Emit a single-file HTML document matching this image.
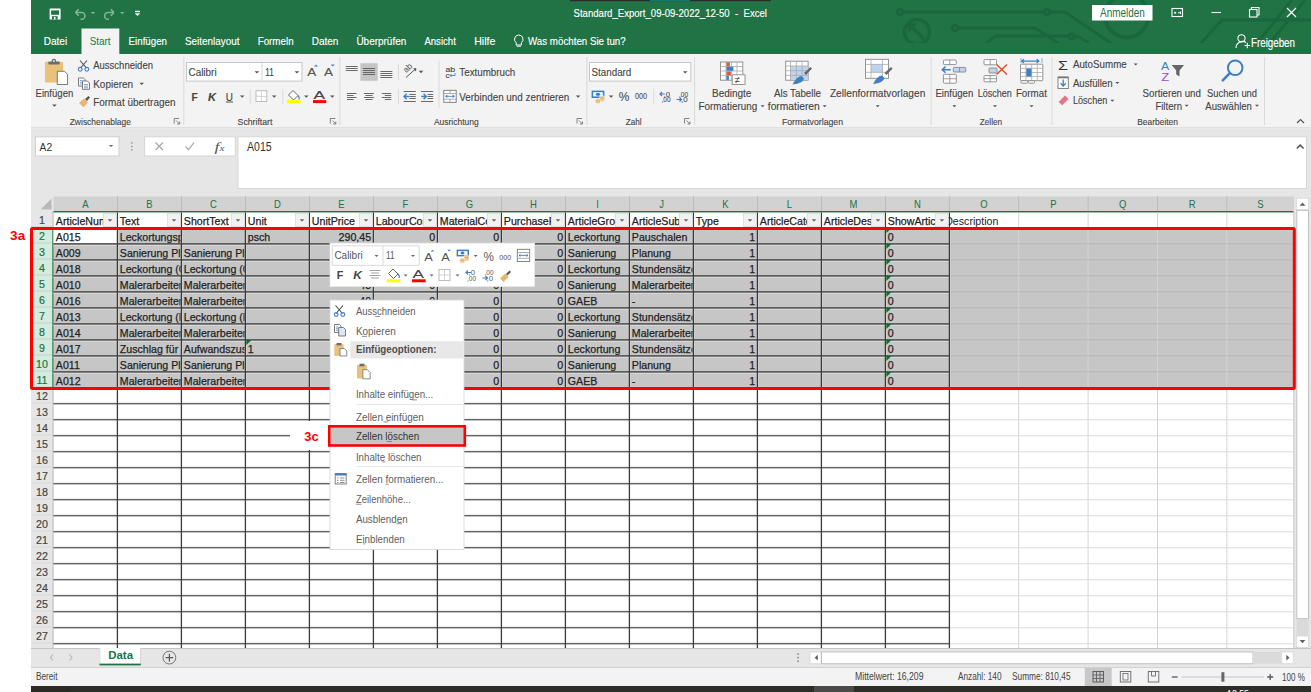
<!DOCTYPE html>
<html><head><meta charset="utf-8"><title>Excel</title>
<style>html,body{margin:0;padding:0;background:#fff;overflow:hidden;width:1311px;height:692px} svg{display:block} text{white-space:pre}</style>
</head><body><svg width="1311" height="692" viewBox="0 0 1311 692">
<rect x="0" y="0" width="1311" height="692" fill="#ffffff" />
<rect x="31" y="0" width="1280" height="54" fill="#217346" />
<svg x="31" y="0" width="1280" height="43" overflow="hidden"><g transform="translate(-31,0)">
<circle cx="900" cy="12" r="2.6" stroke="#1b673d" stroke-width="3" fill="none" stroke-linecap="butt" stroke-linejoin="miter"/>
<path d="M902.6 12 H1044.4" stroke="#1b673d" stroke-width="3" fill="none" stroke-linecap="butt" stroke-linejoin="miter"/>
<circle cx="1047" cy="12" r="2.6" stroke="#1b673d" stroke-width="3" fill="none" stroke-linecap="butt" stroke-linejoin="miter"/>
<path d="M1049.6 12 H1065 L1111 43" stroke="#1b673d" stroke-width="3" fill="none" stroke-linecap="butt" stroke-linejoin="miter"/>
<circle cx="917" cy="32" r="12.5" stroke="#1b673d" stroke-width="3.6" fill="none"/>
<path d="M924 39 L912 27" stroke="#1b673d" stroke-width="3.4" fill="none"/><path d="M908 23 H918 L908 33 Z" fill="#1b673d"/>
<circle cx="955" cy="28" r="2.6" stroke="#1b673d" stroke-width="3" fill="none" stroke-linecap="butt" stroke-linejoin="miter"/>
<path d="M957.6 28 H1035 L1058 43" stroke="#1b673d" stroke-width="3" fill="none" stroke-linecap="butt" stroke-linejoin="miter"/>
<path d="M986 43 L996 36 H1068.9" stroke="#1b673d" stroke-width="3" fill="none" stroke-linecap="butt" stroke-linejoin="miter"/>
<circle cx="1071.5" cy="36.5" r="2.6" stroke="#1b673d" stroke-width="3" fill="none" stroke-linecap="butt" stroke-linejoin="miter"/>
<path d="M1074.1 36.5 H1078 L1089 43" stroke="#1b673d" stroke-width="3" fill="none" stroke-linecap="butt" stroke-linejoin="miter"/>
<circle cx="1126.7" cy="16" r="21.5" stroke="#1b673d" stroke-width="3.8" fill="none"/>
<path d="M1201 43 L1222 20 H1311" stroke="#1b673d" stroke-width="3" fill="none" stroke-linecap="butt" stroke-linejoin="miter"/>
<path d="M1292 0 L1257 43 M1305 0 L1270 43" stroke="#1b673d" stroke-width="3" fill="none" stroke-linecap="butt" stroke-linejoin="miter"/>
</g></svg>
<rect x="570" y="0" width="201" height="1.2" fill="#2b2b2b" />
<rect x="650" y="0" width="40" height="1.2" fill="#0e7b72" />
<rect x="49.6" y="8.4" width="11" height="11.1" fill="#fff" rx="0.6"/>
<rect x="51.1" y="10.4" width="8" height="4.4" fill="#217346" />
<rect x="51.9" y="16.2" width="5.7" height="3.3" fill="#217346" />
<rect x="53.9" y="16.9" width="1.6" height="2.6" fill="#fff" />
<path d="M75.5 12.5 H81.5 A3.4 3.4 0 0 1 81.5 19.3 H80.5 M75.5 12.5 L78.7 9.3 M75.5 12.5 L78.7 15.7" fill="none" stroke="#7fb796" stroke-width="1.6" />
<path d="M90.8 12 h4.4 l-2.2 2.2 z" fill="#7fb796" stroke="none" stroke-width="1" />
<path d="M114 12.5 H108 A3.4 3.4 0 0 0 108 19.3 H109 M114 12.5 L110.8 9.3 M114 12.5 L110.8 15.7" fill="none" stroke="#7fb796" stroke-width="1.6" />
<path d="M120 12 h4.4 l-2.2 2.2 z" fill="#7fb796" stroke="none" stroke-width="1" />
<rect x="135" y="10.8" width="5" height="1.3" fill="#fff" />
<path d="M134.7 13.2 h5.6 l-2.8 2.8 z" fill="#fff" stroke="none" stroke-width="1" />
<text x="573.50" y="17" fill="#ffffff" text-anchor="start" style='font-family:"Liberation Sans", sans-serif;font-size:11.8px;font-weight:400;' textLength="193.50" lengthAdjust="spacingAndGlyphs" stroke="#ffffff" stroke-width="0.15">Standard_Export_09-09-2022_12-50  -  Excel</text>
<rect x="1092" y="5" width="60.5" height="15.5" fill="#ffffff" />
<text x="1100.00" y="16.6" fill="#217346" text-anchor="start" style='font-family:"Liberation Sans", sans-serif;font-size:12px;font-weight:400;' textLength="44.80" lengthAdjust="spacingAndGlyphs" >Anmelden</text>
<rect x="1172" y="8.5" width="10.5" height="8" fill="none" stroke="#fff" stroke-width="1.1"/>
<path d="M1174 12.8 h2.2 M1175.1 11.8 v2 M1178 12.8 h2.5 M1180.5 11.5 v2.6" fill="none" stroke="#fff" stroke-width="1" />
<line x1="1211.5" y1="12.5" x2="1221" y2="12.5" stroke="#ffffff" stroke-width="1.1" />
<rect x="1249.5" y="9.5" width="7.5" height="7.5" fill="none" stroke="#fff" stroke-width="1.1"/>
<path d="M1251.5 9.5 V7.5 H1259 V15 H1257" fill="none" stroke="#fff" stroke-width="1.1" />
<path d="M1287 8 L1296 17 M1296 8 L1287 17" fill="none" stroke="#fff" stroke-width="1.2" />
<rect x="81.5" y="28.5" width="37.8" height="25.5" fill="#f3f3f3" />
<text x="43.70" y="44.8" fill="#ffffff" text-anchor="start" style='font-family:"Liberation Sans", sans-serif;font-size:11.8px;font-weight:400;' textLength="23.50" lengthAdjust="spacingAndGlyphs" stroke="#ffffff" stroke-width="0.15">Datei</text>
<text x="89.70" y="44.8" fill="#217346" text-anchor="start" style='font-family:"Liberation Sans", sans-serif;font-size:11.8px;font-weight:400;' textLength="20.80" lengthAdjust="spacingAndGlyphs" >Start</text>
<text x="128.60" y="44.8" fill="#ffffff" text-anchor="start" style='font-family:"Liberation Sans", sans-serif;font-size:11.8px;font-weight:400;' textLength="38.40" lengthAdjust="spacingAndGlyphs" stroke="#ffffff" stroke-width="0.15">Einfügen</text>
<text x="185.00" y="44.8" fill="#ffffff" text-anchor="start" style='font-family:"Liberation Sans", sans-serif;font-size:11.8px;font-weight:400;' textLength="54.50" lengthAdjust="spacingAndGlyphs" stroke="#ffffff" stroke-width="0.15">Seitenlayout</text>
<text x="257.70" y="44.8" fill="#ffffff" text-anchor="start" style='font-family:"Liberation Sans", sans-serif;font-size:11.8px;font-weight:400;' textLength="35.90" lengthAdjust="spacingAndGlyphs" stroke="#ffffff" stroke-width="0.15">Formeln</text>
<text x="311.70" y="44.8" fill="#ffffff" text-anchor="start" style='font-family:"Liberation Sans", sans-serif;font-size:11.8px;font-weight:400;' textLength="26.70" lengthAdjust="spacingAndGlyphs" stroke="#ffffff" stroke-width="0.15">Daten</text>
<text x="356.40" y="44.8" fill="#ffffff" text-anchor="start" style='font-family:"Liberation Sans", sans-serif;font-size:11.8px;font-weight:400;' textLength="49.90" lengthAdjust="spacingAndGlyphs" stroke="#ffffff" stroke-width="0.15">Überprüfen</text>
<text x="424.40" y="44.8" fill="#ffffff" text-anchor="start" style='font-family:"Liberation Sans", sans-serif;font-size:11.8px;font-weight:400;' textLength="31.40" lengthAdjust="spacingAndGlyphs" stroke="#ffffff" stroke-width="0.15">Ansicht</text>
<text x="474.20" y="44.8" fill="#ffffff" text-anchor="start" style='font-family:"Liberation Sans", sans-serif;font-size:11.8px;font-weight:400;' textLength="21.20" lengthAdjust="spacingAndGlyphs" stroke="#ffffff" stroke-width="0.15">Hilfe</text>
<path d="M518.8 35 a4.3 4.3 0 0 1 2.6 7.7 v2.3 h-5.2 v-2.3 a4.3 4.3 0 0 1 2.6 -7.7 z" fill="none" stroke="#fff" stroke-width="1" />
<line x1="516.6" y1="46.2" x2="521" y2="46.2" stroke="#fff" stroke-width="1" />
<text x="528.00" y="44.8" fill="#ffffff" text-anchor="start" style='font-family:"Liberation Sans", sans-serif;font-size:11.8px;font-weight:400;' textLength="97.70" lengthAdjust="spacingAndGlyphs" stroke="#ffffff" stroke-width="0.15">Was möchten Sie tun?</text>
<circle cx="1241.5" cy="38.3" r="3.6" fill="none" stroke="#fff" stroke-width="1.1"/>
<path d="M1236 48 a6.5 6.5 0 0 1 10 -5.5" fill="none" stroke="#fff" stroke-width="1.1" />
<path d="M1244.5 45.5 h5.5 M1247.25 42.7 v5.6" fill="none" stroke="#fff" stroke-width="1.1" />
<text x="1251.00" y="46.6" fill="#ffffff" text-anchor="start" style='font-family:"Liberation Sans", sans-serif;font-size:12px;font-weight:400;' textLength="44.00" lengthAdjust="spacingAndGlyphs" stroke="#ffffff" stroke-width="0.15">Freigeben</text>
<rect x="31" y="54" width="1280" height="73.5" fill="#f3f3f3" />
<rect x="31" y="127.3" width="1280" height="1" fill="#d5d5d5" />
<rect x="44.9" y="61.8" width="18.2" height="20.8" fill="#e8c17b" rx="1"/>
<rect x="48.3" y="61.4" width="11.4" height="3" fill="#6d6d6d" rx="1"/>
<circle cx="53.9" cy="61" r="2.3" fill="#6d6d6d"/><circle cx="53.9" cy="61" r="0.9" fill="#f3f3f3"/>
<path d="M57.3 71.3 H64.5 L67.6 74.4 V84.5 H57.3 Z" fill="#fff" stroke="#6d6d6d" stroke-width="0.9" />
<text x="35.50" y="96.7" fill="#444444" text-anchor="start" style='font-family:"Liberation Sans", sans-serif;font-size:10.8px;font-weight:400;' textLength="37.80" lengthAdjust="spacingAndGlyphs" stroke="#444444" stroke-width="0.12">Einfügen</text>
<path d="M52.1 104.44999999999999 h4.6 l-2.3 2.3 z" fill="#555" stroke="none" stroke-width="1" />
<path d="M80 60.5 L86.5 68 M87 60.5 L80.5 68" fill="none" stroke="#505050" stroke-width="1.1" />
<circle cx="80.2" cy="69.3" r="1.9" fill="none" stroke="#3f7fc5" stroke-width="1.1"/>
<circle cx="86.8" cy="69.3" r="1.9" fill="none" stroke="#3f7fc5" stroke-width="1.1"/>
<text x="93.20" y="69.3" fill="#444444" text-anchor="start" style='font-family:"Liberation Sans", sans-serif;font-size:10.8px;font-weight:400;' textLength="59.80" lengthAdjust="spacingAndGlyphs" stroke="#444444" stroke-width="0.12">Ausschneiden</text>
<path d="M78.5 78 H83.5 L85 79.5 V86 H78.5 Z" fill="#fff" stroke="#6d6d6d" stroke-width="0.9" />
<path d="M82.5 81 H87.5 L89.5 83 V89.3 H82.5 Z" fill="#fff" stroke="#6d6d6d" stroke-width="0.9" />
<path d="M79.8 80.5 h2.5 M79.8 82.3 h2.5 M79.8 84 h2.5 M84 84.5 h4 M84 86.2 h4 M84 87.8 h4" fill="none" stroke="#3f7fc5" stroke-width="0.7" />
<text x="93.20" y="87.6" fill="#444444" text-anchor="start" style='font-family:"Liberation Sans", sans-serif;font-size:10.8px;font-weight:400;' textLength="39.90" lengthAdjust="spacingAndGlyphs" stroke="#444444" stroke-width="0.12">Kopieren</text>
<path d="M139.39999999999998 82.75 h4.6 l-2.3 2.3 z" fill="#555" stroke="none" stroke-width="1" />
<path d="M79 103 L84 98.5 L88 102.5 L83.5 107.2 Z" fill="#e8b66f" stroke="none" stroke-width="1" />
<path d="M85 99 L88.5 96 L90 97.5 L87 101 Z" fill="#555" stroke="none" stroke-width="1" />
<text x="93.20" y="106.2" fill="#444444" text-anchor="start" style='font-family:"Liberation Sans", sans-serif;font-size:10.8px;font-weight:400;' textLength="82.30" lengthAdjust="spacingAndGlyphs" stroke="#444444" stroke-width="0.12">Format übertragen</text>
<text x="69.70" y="124.5" fill="#444444" text-anchor="start" style='font-family:"Liberation Sans", sans-serif;font-size:9.8px;font-weight:400;' textLength="61.30" lengthAdjust="spacingAndGlyphs" stroke="#444444" stroke-width="0.12">Zwischenablage</text>
<path d="M174.2 123.5 V118.5 H179.2" fill="none" stroke="#777" stroke-width="0.9" />
<path d="M176.2 120.5 L179.7 124.0 M179.7 121.5 V124.0 H177.2" fill="none" stroke="#777" stroke-width="0.9" />
<rect x="183.3" y="57" width="1" height="68" fill="#dadada" />
<rect x="186.5" y="62.5" width="115.5" height="18.6" fill="#ffffff" stroke="#c6c6c6" stroke-width="1"/>
<line x1="262" y1="63" x2="262" y2="80.6" stroke="#d4d4d4" stroke-width="1" />
<text x="188.50" y="76" fill="#444" text-anchor="start" style='font-family:"Liberation Sans", sans-serif;font-size:10.8px;font-weight:400;' textLength="28.10" lengthAdjust="spacingAndGlyphs" stroke="#444" stroke-width="0.12">Calibri</text>
<path d="M254.59999999999997 71.14999999999999 h4.6 l-2.3 2.3 z" fill="#555" stroke="none" stroke-width="1" />
<text x="265.20" y="76" fill="#444" text-anchor="start" style='font-family:"Liberation Sans", sans-serif;font-size:10.8px;font-weight:400;' textLength="8.50" lengthAdjust="spacingAndGlyphs" stroke="#444" stroke-width="0.12">11</text>
<path d="M294.59999999999997 71.14999999999999 h4.6 l-2.3 2.3 z" fill="#555" stroke="none" stroke-width="1" />
<text x="307.30" y="76" fill="#555" text-anchor="start" style='font-family:"Liberation Sans", sans-serif;font-size:11.5px;font-weight:400;' textLength="9.00" lengthAdjust="spacingAndGlyphs" stroke="#555" stroke-width="0.12">A</text>
<path d="M314 66.5 l2 -2 l2 2 z" fill="#3f7fc5" stroke="none" stroke-width="1" />
<text x="324.00" y="76" fill="#555" text-anchor="start" style='font-family:"Liberation Sans", sans-serif;font-size:11.5px;font-weight:400;' textLength="9.00" lengthAdjust="spacingAndGlyphs" stroke="#555" stroke-width="0.12">A</text>
<path d="M330.8 64.5 l2 2 l2 -2 z" fill="#3f7fc5" stroke="none" stroke-width="1" />
<text x="191.60" y="101" fill="#444" text-anchor="start" style='font-family:"Liberation Sans", sans-serif;font-size:10.5px;font-weight:700;' textLength="6.20" lengthAdjust="spacingAndGlyphs" stroke="#444" stroke-width="0.12">F</text>
<text x="208.00" y="101" fill="#444" text-anchor="start" style='font-family:"Liberation Sans", sans-serif;font-size:10.5px;font-weight:700;font-style:italic' textLength="8.00" lengthAdjust="spacingAndGlyphs" stroke="#444" stroke-width="0.12">K</text>
<text x="225.80" y="100.5" fill="#444" text-anchor="start" style='font-family:"Liberation Sans", sans-serif;font-size:10.5px;font-weight:400;' textLength="7.20" lengthAdjust="spacingAndGlyphs" stroke="#444" stroke-width="0.12">U</text>
<line x1="225.8" y1="102" x2="233" y2="102" stroke="#444" stroke-width="0.9" />
<path d="M239.89999999999998 95.55 h4.6 l-2.3 2.3 z" fill="#555" stroke="none" stroke-width="1" />
<rect x="249.8" y="89.4" width="1" height="14.899999999999991" fill="#dadada" />
<rect x="256" y="90.7" width="10.8" height="10.8" fill="#fff" stroke="#b5b5b5" stroke-width="0.9"/>
<line x1="261.4" y1="90.7" x2="261.4" y2="101.5" stroke="#c8c8c8" stroke-width="0.8" />
<line x1="256" y1="96.1" x2="266.8" y2="96.9" stroke="#c8c8c8" stroke-width="0.8" />
<path d="M271.9 95.55 h4.6 l-2.3 2.3 z" fill="#555" stroke="none" stroke-width="1" />
<rect x="282.3" y="89.4" width="1" height="14.899999999999991" fill="#dadada" />
<path d="M288.5 95 L293 90.5 L298 95.5 L293.5 100 Z" fill="#fff" stroke="#555" stroke-width="0.9" />
<path d="M298 95.5 q2 2 1 4" fill="none" stroke="#3f7fc5" stroke-width="1.2" />
<rect x="286.8" y="100.1" width="13.8" height="3" fill="#ffff00" />
<path d="M304.0 95.55 h4.6 l-2.3 2.3 z" fill="#555" stroke="none" stroke-width="1" />
<text x="313.60" y="98.6" fill="#444" text-anchor="start" style='font-family:"Liberation Sans", sans-serif;font-size:11px;font-weight:400;' textLength="11.60" lengthAdjust="spacingAndGlyphs" stroke="#444" stroke-width="0.12">A</text>
<rect x="313" y="100.1" width="13.2" height="3" fill="#ff0000" />
<path d="M330.0 95.55 h4.6 l-2.3 2.3 z" fill="#555" stroke="none" stroke-width="1" />
<text x="237.60" y="124.5" fill="#444444" text-anchor="start" style='font-family:"Liberation Sans", sans-serif;font-size:9.8px;font-weight:400;' textLength="34.80" lengthAdjust="spacingAndGlyphs" stroke="#444444" stroke-width="0.12">Schriftart</text>
<path d="M330.3 123.5 V118.5 H335.3" fill="none" stroke="#777" stroke-width="0.9" />
<path d="M332.3 120.5 L335.8 124.0 M335.8 121.5 V124.0 H333.3" fill="none" stroke="#777" stroke-width="0.9" />
<rect x="339.4" y="57" width="1" height="68" fill="#dadada" />
<line x1="345.7" y1="66.5" x2="357.7" y2="66.5" stroke="#6a6a6a" stroke-width="1" />
<line x1="345.7" y1="68.5" x2="357.7" y2="68.5" stroke="#6a6a6a" stroke-width="1" />
<line x1="345.7" y1="70.5" x2="357.7" y2="70.5" stroke="#6a6a6a" stroke-width="1" />
<rect x="360.4" y="63.2" width="17.3" height="17.6" fill="#c5c5c5" />
<line x1="363" y1="68.5" x2="375" y2="68.5" stroke="#666" stroke-width="1" />
<line x1="363" y1="70.5" x2="375" y2="70.5" stroke="#666" stroke-width="1" />
<line x1="363" y1="72.5" x2="375" y2="72.5" stroke="#666" stroke-width="1" />
<line x1="363" y1="74.5" x2="375" y2="74.5" stroke="#666" stroke-width="1" />
<line x1="380.4" y1="71.5" x2="392.4" y2="71.5" stroke="#6a6a6a" stroke-width="1" />
<line x1="380.4" y1="73.5" x2="392.4" y2="73.5" stroke="#6a6a6a" stroke-width="1" />
<line x1="380.4" y1="75.5" x2="392.4" y2="75.5" stroke="#6a6a6a" stroke-width="1" />
<line x1="380.4" y1="77.5" x2="392.4" y2="77.5" stroke="#6a6a6a" stroke-width="1" />
<rect x="397.9" y="64.4" width="1" height="15.799999999999997" fill="#dadada" />
<text x="403.20" y="71.8" fill="#555" text-anchor="start" style='font-family:"Liberation Sans", sans-serif;font-size:8.5px;font-weight:400;' transform="rotate(-45 406.5 69)">ab</text>
<path d="M406 77.5 L415.5 69" fill="none" stroke="#555" stroke-width="1" />
<path d="M413 68.3 L416.3 68.2 L416 71.5 Z" fill="#555" stroke="none" stroke-width="1" />
<path d="M418.7 70.85 h4.6 l-2.3 2.3 z" fill="#555" stroke="none" stroke-width="1" />
<rect x="438.5" y="60.7" width="1" height="47.0" fill="#dadada" />
<text x="445.40" y="71.5" fill="#444" text-anchor="start" style='font-family:"Liberation Sans", sans-serif;font-size:7.5px;font-weight:400;' textLength="9.60" lengthAdjust="spacingAndGlyphs" stroke="#444" stroke-width="0.12">ab</text>
<text x="445.40" y="78" fill="#444" text-anchor="start" style='font-family:"Liberation Sans", sans-serif;font-size:7.5px;font-weight:400;' textLength="4.00" lengthAdjust="spacingAndGlyphs" stroke="#444" stroke-width="0.12">c</text>
<path d="M455 73 v2.5 h-5 M451.5 74 l-1.5 1.5 l1.5 1.5" fill="none" stroke="#3f7fc5" stroke-width="0.9" />
<text x="459.30" y="76" fill="#444444" text-anchor="start" style='font-family:"Liberation Sans", sans-serif;font-size:10.8px;font-weight:400;' textLength="56.00" lengthAdjust="spacingAndGlyphs" stroke="#444444" stroke-width="0.12">Textumbruch</text>
<line x1="347" y1="93.5" x2="356.5" y2="93.5" stroke="#6a6a6a" stroke-width="1" />
<line x1="347" y1="95.5" x2="353.5" y2="95.5" stroke="#6a6a6a" stroke-width="1" />
<line x1="347" y1="97.5" x2="356.5" y2="97.5" stroke="#6a6a6a" stroke-width="1" />
<line x1="347" y1="99.5" x2="353.5" y2="99.5" stroke="#6a6a6a" stroke-width="1" />
<line x1="364.0" y1="93.5" x2="374.0" y2="93.5" stroke="#6a6a6a" stroke-width="1" />
<line x1="365.5" y1="95.5" x2="372.5" y2="95.5" stroke="#6a6a6a" stroke-width="1" />
<line x1="364.0" y1="97.5" x2="374.0" y2="97.5" stroke="#6a6a6a" stroke-width="1" />
<line x1="365.5" y1="99.5" x2="372.5" y2="99.5" stroke="#6a6a6a" stroke-width="1" />
<line x1="381.8" y1="93.5" x2="391.3" y2="93.5" stroke="#6a6a6a" stroke-width="1" />
<line x1="384.8" y1="95.5" x2="391.3" y2="95.5" stroke="#6a6a6a" stroke-width="1" />
<line x1="381.8" y1="97.5" x2="391.3" y2="97.5" stroke="#6a6a6a" stroke-width="1" />
<line x1="384.8" y1="99.5" x2="391.3" y2="99.5" stroke="#6a6a6a" stroke-width="1" />
<rect x="397.9" y="88.8" width="1" height="15.799999999999997" fill="#dadada" />
<line x1="403.6" y1="91.5" x2="415.8" y2="91.5" stroke="#6a6a6a" stroke-width="1" />
<line x1="409.3" y1="94.5" x2="415.8" y2="94.5" stroke="#6a6a6a" stroke-width="1" />
<line x1="409.3" y1="96.5" x2="415.8" y2="96.5" stroke="#6a6a6a" stroke-width="1" />
<line x1="409.3" y1="98.5" x2="415.8" y2="98.5" stroke="#6a6a6a" stroke-width="1" />
<line x1="403.6" y1="101.5" x2="415.8" y2="101.5" stroke="#6a6a6a" stroke-width="1" />
<path d="M404 96.5 h5 M406.7 93.8 l-2.7 2.7 l2.7 2.7" fill="none" stroke="#3f7fc5" stroke-width="1.4" />
<line x1="421" y1="91.5" x2="433.2" y2="91.5" stroke="#6a6a6a" stroke-width="1" />
<line x1="427.5" y1="94.5" x2="433.2" y2="94.5" stroke="#6a6a6a" stroke-width="1" />
<line x1="427.5" y1="96.5" x2="433.2" y2="96.5" stroke="#6a6a6a" stroke-width="1" />
<line x1="427.5" y1="98.5" x2="433.2" y2="98.5" stroke="#6a6a6a" stroke-width="1" />
<line x1="421" y1="101.5" x2="433.2" y2="101.5" stroke="#6a6a6a" stroke-width="1" />
<path d="M421.3 96.5 h5 M423.6 93.8 l2.7 2.7 l-2.7 2.7" fill="none" stroke="#3f7fc5" stroke-width="1.4" />
<rect x="443.8" y="90.3" width="12.4" height="12" fill="#fff" stroke="#777" stroke-width="0.9"/>
<line x1="443.8" y1="93.5" x2="456.2" y2="93.5" stroke="#999" stroke-width="0.8" />
<line x1="443.8" y1="99.2" x2="456.2" y2="99.2" stroke="#999" stroke-width="0.8" />
<path d="M446.5 96.3 h7" fill="none" stroke="#3f7fc5" stroke-width="0.9" />
<path d="M445 96.3 l2.3 -1.8 v3.6 z M455 96.3 l-2.3 -1.8 v3.6 z" fill="#3f7fc5" stroke="none" stroke-width="1" />
<line x1="450" y1="90.3" x2="450" y2="93.5" stroke="#999" stroke-width="0.8" />
<line x1="450" y1="99.2" x2="450" y2="102.3" stroke="#999" stroke-width="0.8" />
<text x="459.30" y="100.6" fill="#444444" text-anchor="start" style='font-family:"Liberation Sans", sans-serif;font-size:10.8px;font-weight:400;' textLength="110.00" lengthAdjust="spacingAndGlyphs" stroke="#444444" stroke-width="0.12">Verbinden und zentrieren</text>
<path d="M575.8000000000001 95.55 h4.6 l-2.3 2.3 z" fill="#555" stroke="none" stroke-width="1" />
<text x="433.90" y="124.5" fill="#444444" text-anchor="start" style='font-family:"Liberation Sans", sans-serif;font-size:9.8px;font-weight:400;' textLength="44.80" lengthAdjust="spacingAndGlyphs" stroke="#444444" stroke-width="0.12">Ausrichtung</text>
<path d="M577 123.5 V118.5 H582" fill="none" stroke="#777" stroke-width="0.9" />
<path d="M579 120.5 L582.5 124.0 M582.5 121.5 V124.0 H580" fill="none" stroke="#777" stroke-width="0.9" />
<rect x="586.4" y="57" width="1" height="68" fill="#dadada" />
<rect x="589.5" y="62.5" width="101.3" height="18.6" fill="#ffffff" stroke="#c6c6c6" stroke-width="1"/>
<text x="591.60" y="76" fill="#444" text-anchor="start" style='font-family:"Liberation Sans", sans-serif;font-size:10.8px;font-weight:400;' textLength="39.70" lengthAdjust="spacingAndGlyphs" stroke="#444" stroke-width="0.12">Standard</text>
<path d="M682.9000000000001 71.14999999999999 h4.6 l-2.3 2.3 z" fill="#555" stroke="none" stroke-width="1" />
<rect x="591.6" y="90.6" width="12.8" height="7.4" fill="#3f7fc5" />
<rect x="593.2" y="92.2" width="9.6" height="4.2" fill="#fff" />
<ellipse cx="598" cy="94.3" rx="2.2" ry="1.6" fill="#3f7fc5"/>
<rect x="599.6" y="95.8" width="5" height="5.8" rx="1.6" fill="#eec58a" stroke="#f3f3f3" stroke-width="0.6"/>
<line x1="599.8" y1="98.2" x2="604.4" y2="98.2" stroke="#d9a860" stroke-width="0.6" />
<rect x="595.4" y="98.6" width="5" height="5" rx="1.6" fill="#eec58a" stroke="#f3f3f3" stroke-width="0.6"/>
<line x1="595.6" y1="101" x2="600.2" y2="101" stroke="#d9a860" stroke-width="0.6" />
<path d="M608.8000000000001 95.55 h4.6 l-2.3 2.3 z" fill="#555" stroke="none" stroke-width="1" />
<text x="618.80" y="101" fill="#555" text-anchor="start" style='font-family:"Liberation Sans", sans-serif;font-size:12px;font-weight:400;' textLength="10.60" lengthAdjust="spacingAndGlyphs" stroke="#555" stroke-width="0.12">%</text>
<text x="634.90" y="99.3" fill="#555" text-anchor="start" style='font-family:"Liberation Sans", sans-serif;font-size:8.5px;font-weight:400;' textLength="12.20" lengthAdjust="spacingAndGlyphs" stroke="#555" stroke-width="0.12">000</text>
<rect x="653.2" y="88.8" width="1" height="15.799999999999997" fill="#dadada" />
<text x="663.50" y="96.5" fill="#555" text-anchor="start" style='font-family:"Liberation Sans", sans-serif;font-size:7px;font-weight:400;' textLength="6.50" lengthAdjust="spacingAndGlyphs" stroke="#555" stroke-width="0.12">,0</text>
<text x="661.50" y="102" fill="#555" text-anchor="start" style='font-family:"Liberation Sans", sans-serif;font-size:7px;font-weight:400;' textLength="9.00" lengthAdjust="spacingAndGlyphs" stroke="#555" stroke-width="0.12">,00</text>
<path d="M659.8 94 h5 M662 92 l-2 2 l2 2" fill="none" stroke="#3f7fc5" stroke-width="1.2" />
<text x="679.00" y="96.5" fill="#555" text-anchor="start" style='font-family:"Liberation Sans", sans-serif;font-size:7px;font-weight:400;' textLength="9.00" lengthAdjust="spacingAndGlyphs" stroke="#555" stroke-width="0.12">,00</text>
<text x="681.00" y="102" fill="#555" text-anchor="start" style='font-family:"Liberation Sans", sans-serif;font-size:7px;font-weight:400;' textLength="6.50" lengthAdjust="spacingAndGlyphs" stroke="#555" stroke-width="0.12">,0</text>
<path d="M676.5 99.5 h5 M679.5 97.5 l2 2 l-2 2" fill="none" stroke="#3f7fc5" stroke-width="1.2" />
<text x="625.80" y="124.5" fill="#444444" text-anchor="start" style='font-family:"Liberation Sans", sans-serif;font-size:9.8px;font-weight:400;' textLength="15.80" lengthAdjust="spacingAndGlyphs" stroke="#444444" stroke-width="0.12">Zahl</text>
<path d="M684.5 123.5 V118.5 H689.5" fill="none" stroke="#777" stroke-width="0.9" />
<path d="M686.5 120.5 L690.0 124.0 M690.0 121.5 V124.0 H687.5" fill="none" stroke="#777" stroke-width="0.9" />
<rect x="694.1" y="57" width="1" height="68" fill="#dadada" />
<rect x="720.5" y="62" width="22.3" height="18.2" fill="#fff" stroke="#888" stroke-width="0.9"/>
<line x1="720.5" y1="66.5" x2="742.8" y2="66.5" stroke="#aaa" stroke-width="0.8" />
<line x1="720.5" y1="71" x2="742.8" y2="71" stroke="#aaa" stroke-width="0.8" />
<line x1="720.5" y1="75.6" x2="742.8" y2="75.6" stroke="#aaa" stroke-width="0.8" />
<line x1="726" y1="62" x2="726" y2="80.2" stroke="#aaa" stroke-width="0.8" />
<line x1="731.5" y1="62" x2="731.5" y2="80.2" stroke="#aaa" stroke-width="0.8" />
<line x1="737" y1="62" x2="737" y2="80.2" stroke="#aaa" stroke-width="0.8" />
<rect x="726.4" y="62.4" width="3.5" height="4" fill="#e05a36" />
<rect x="726.4" y="66.8" width="7" height="4" fill="#3f7fc5" />
<rect x="726.4" y="71.4" width="4.5" height="4" fill="#e05a36" />
<rect x="726.4" y="75.9" width="2.5" height="4" fill="#3f7fc5" />
<rect x="732.2" y="74.8" width="12.8" height="9.7" fill="#fff" stroke="#888" stroke-width="0.9"/>
<text x="735.00" y="82.5" fill="#444" text-anchor="start" style='font-family:"Liberation Sans", sans-serif;font-size:9px;font-weight:400;' stroke="#444" stroke-width="0.12">≠</text>
<text x="712.00" y="96.9" fill="#444444" text-anchor="start" style='font-family:"Liberation Sans", sans-serif;font-size:10.8px;font-weight:400;' textLength="39.40" lengthAdjust="spacingAndGlyphs" stroke="#444444" stroke-width="0.12">Bedingte</text>
<text x="698.60" y="110.0" fill="#444444" text-anchor="start" style='font-family:"Liberation Sans", sans-serif;font-size:10.8px;font-weight:400;' textLength="58.60" lengthAdjust="spacingAndGlyphs" stroke="#444444" stroke-width="0.12">Formatierung</text>
<path d="M760.6 105.2 h4 l-2 2 z" fill="#555" stroke="none" stroke-width="1" />
<rect x="785.7" y="61.2" width="22.4" height="19" fill="#fff" stroke="#888" stroke-width="0.9"/>
<rect x="790.5" y="66" width="17.5" height="14" fill="#bcd4ee" />
<line x1="785.7" y1="66" x2="808.1" y2="66" stroke="#aaa" stroke-width="0.8" />
<line x1="785.7" y1="70.7" x2="808.1" y2="70.7" stroke="#aaa" stroke-width="0.8" />
<line x1="785.7" y1="75.4" x2="808.1" y2="75.4" stroke="#aaa" stroke-width="0.8" />
<line x1="790.5" y1="61.2" x2="790.5" y2="80.2" stroke="#aaa" stroke-width="0.8" />
<line x1="796.3" y1="61.2" x2="796.3" y2="80.2" stroke="#aaa" stroke-width="0.8" />
<line x1="802.1" y1="61.2" x2="802.1" y2="80.2" stroke="#aaa" stroke-width="0.8" />
<path d="M804 73 L810.5 67 L812 68.5 L806 75 Z" fill="#666" stroke="none" stroke-width="1" />
<path d="M792.5 84.5 Q797 76 801.5 76 L804 78.5 Q803 83.5 792.5 84.5 Z" fill="#3f7fc5" stroke="none" stroke-width="1" />
<text x="774.00" y="96.9" fill="#444444" text-anchor="start" style='font-family:"Liberation Sans", sans-serif;font-size:10.8px;font-weight:400;' textLength="47.00" lengthAdjust="spacingAndGlyphs" stroke="#444444" stroke-width="0.12">Als Tabelle</text>
<text x="767.80" y="110.0" fill="#444444" text-anchor="start" style='font-family:"Liberation Sans", sans-serif;font-size:10.8px;font-weight:400;' textLength="52.00" lengthAdjust="spacingAndGlyphs" stroke="#444444" stroke-width="0.12">formatieren</text>
<path d="M822.6 105.2 h4 l-2 2 z" fill="#555" stroke="none" stroke-width="1" />
<rect x="865.5" y="59.3" width="23" height="19" fill="#fff" stroke="#888" stroke-width="0.9"/>
<rect x="871" y="64.4" width="11.5" height="8" fill="#bcd4ee" />
<line x1="865.5" y1="64.4" x2="888.5" y2="64.4" stroke="#aaa" stroke-width="0.8" />
<line x1="865.5" y1="72.3" x2="888.5" y2="72.3" stroke="#aaa" stroke-width="0.8" />
<line x1="871" y1="59.3" x2="871" y2="78.3" stroke="#aaa" stroke-width="0.8" />
<line x1="882.5" y1="59.3" x2="882.5" y2="78.3" stroke="#aaa" stroke-width="0.8" />
<path d="M884.5 73 L891 67 L892.5 68.5 L886.5 75 Z" fill="#666" stroke="none" stroke-width="1" />
<path d="M873 84 Q877.5 75.5 882 75.5 L884.5 78 Q883.5 83 873 84 Z" fill="#3f7fc5" stroke="none" stroke-width="1" />
<text x="829.90" y="96.9" fill="#444444" text-anchor="start" style='font-family:"Liberation Sans", sans-serif;font-size:10.8px;font-weight:400;' textLength="95.40" lengthAdjust="spacingAndGlyphs" stroke="#444444" stroke-width="0.12">Zellenformatvorlagen</text>
<path d="M875.7 105.2 h4 l-2 2 z" fill="#555" stroke="none" stroke-width="1" />
<text x="781.90" y="124.5" fill="#444444" text-anchor="start" style='font-family:"Liberation Sans", sans-serif;font-size:9.8px;font-weight:400;' textLength="61.20" lengthAdjust="spacingAndGlyphs" stroke="#444444" stroke-width="0.12">Formatvorlagen</text>
<rect x="930.6" y="57" width="1" height="68" fill="#dadada" />
<rect x="943.4" y="60" width="12.9" height="4.6" fill="#fff" stroke="#888" stroke-width="0.9" rx="0.8"/>
<line x1="949.8" y1="60" x2="949.8" y2="64.6" stroke="#888" stroke-width="0.8" />
<rect x="953.3" y="67.4" width="12.5" height="4.6" fill="#bcd4ee" stroke="#888" stroke-width="0.9" rx="0.8"/>
<line x1="959.5" y1="67.4" x2="959.5" y2="72" stroke="#888" stroke-width="0.8" />
<path d="M942.3 69.7 h8.5 M945.5 66.6 l-3.2 3.1 l3.2 3.1" fill="none" stroke="#3f7fc5" stroke-width="1.5" />
<rect x="943.4" y="74.3" width="12.9" height="8.9" fill="#fff" stroke="#888" stroke-width="0.9" rx="0.8"/>
<line x1="943.4" y1="78.75" x2="956.3" y2="78.75" stroke="#888" stroke-width="0.8" />
<line x1="949.8" y1="74.3" x2="949.8" y2="83.2" stroke="#888" stroke-width="0.8" />
<text x="935.40" y="96.9" fill="#444444" text-anchor="start" style='font-family:"Liberation Sans", sans-serif;font-size:10.8px;font-weight:400;' textLength="37.90" lengthAdjust="spacingAndGlyphs" stroke="#444444" stroke-width="0.12">Einfügen</text>
<path d="M952.4 105.2 h4 l-2 2 z" fill="#555" stroke="none" stroke-width="1" />
<rect x="984" y="59.6" width="12.5" height="5.2" fill="#fff" stroke="#888" stroke-width="0.9" rx="0.8"/>
<line x1="990.2" y1="59.6" x2="990.2" y2="64.8" stroke="#888" stroke-width="0.8" />
<rect x="989" y="68" width="8" height="5" fill="#bcd4ee" stroke="#888" stroke-width="0.9" rx="0.8"/>
<path d="M996.5 64.5 L1007 74.5 M1007 64.5 L996.5 74.5" fill="none" stroke="#d9542b" stroke-width="1.5" />
<rect x="984" y="75.6" width="12.5" height="6.2" fill="#fff" stroke="#888" stroke-width="0.9" rx="0.8"/>
<line x1="984" y1="78.7" x2="996.5" y2="78.7" stroke="#888" stroke-width="0.8" />
<line x1="990.2" y1="75.6" x2="990.2" y2="81.8" stroke="#888" stroke-width="0.8" />
<text x="977.70" y="96.9" fill="#444444" text-anchor="start" style='font-family:"Liberation Sans", sans-serif;font-size:10.8px;font-weight:400;' textLength="34.20" lengthAdjust="spacingAndGlyphs" stroke="#444444" stroke-width="0.12">Löschen</text>
<path d="M993 105.2 h4 l-2 2 z" fill="#555" stroke="none" stroke-width="1" />
<rect x="1020.5" y="64.2" width="22.3" height="16.5" fill="#fff" stroke="#888" stroke-width="0.9" rx="0.8"/>
<line x1="1026" y1="64.2" x2="1026" y2="80.7" stroke="#aaa" stroke-width="0.8" />
<line x1="1031.7" y1="64.2" x2="1031.7" y2="80.7" stroke="#aaa" stroke-width="0.8" />
<line x1="1037.3" y1="64.2" x2="1037.3" y2="80.7" stroke="#aaa" stroke-width="0.8" />
<line x1="1020.5" y1="68.3" x2="1042.8" y2="68.3" stroke="#aaa" stroke-width="0.8" />
<line x1="1020.5" y1="72.5" x2="1042.8" y2="72.5" stroke="#aaa" stroke-width="0.8" />
<line x1="1020.5" y1="76.6" x2="1042.8" y2="76.6" stroke="#aaa" stroke-width="0.8" />
<rect x="1026.3" y="68.5" width="5.2" height="8" fill="#3f7fc5" />
<path d="M1021.5 61.1 h17.5 M1024 59.2 l-2.4 1.9 l2.4 1.9 M1036.6 59.2 l2.4 1.9 l-2.4 1.9" fill="none" stroke="#3f7fc5" stroke-width="1.1" />
<path d="M1021 58 v5 M1042 58 v5" fill="none" stroke="#3f7fc5" stroke-width="0.6" />
<rect x="1021" y="80.7" width="6.5" height="2.5" fill="#fff" stroke="#888" stroke-width="0.9" rx="0.8"/>
<rect x="1028" y="80.7" width="6.5" height="2.5" fill="#fff" stroke="#888" stroke-width="0.9" rx="0.8"/>
<text x="1015.90" y="96.9" fill="#444444" text-anchor="start" style='font-family:"Liberation Sans", sans-serif;font-size:10.8px;font-weight:400;' textLength="31.00" lengthAdjust="spacingAndGlyphs" stroke="#444444" stroke-width="0.12">Format</text>
<path d="M1029.6 105.2 h4 l-2 2 z" fill="#555" stroke="none" stroke-width="1" />
<text x="979.80" y="124.5" fill="#444444" text-anchor="start" style='font-family:"Liberation Sans", sans-serif;font-size:9.8px;font-weight:400;' textLength="22.30" lengthAdjust="spacingAndGlyphs" stroke="#444444" stroke-width="0.12">Zellen</text>
<rect x="1051.5" y="57" width="1" height="68" fill="#dadada" />
<text x="1058.00" y="70" fill="#333" text-anchor="start" style='font-family:"Liberation Sans", sans-serif;font-size:13px;font-weight:400;' textLength="10.00" lengthAdjust="spacingAndGlyphs" >Σ</text>
<text x="1072.90" y="68.4" fill="#444444" text-anchor="start" style='font-family:"Liberation Sans", sans-serif;font-size:10.8px;font-weight:400;' textLength="53.90" lengthAdjust="spacingAndGlyphs" stroke="#444444" stroke-width="0.12">AutoSumme</text>
<path d="M1133.7 63.5 h4 l-2 2 z" fill="#555" stroke="none" stroke-width="1" />
<rect x="1058" y="76.9" width="10.3" height="11.6" fill="#fff" stroke="#777" stroke-width="0.9"/>
<line x1="1058" y1="77.6" x2="1068.3" y2="77.6" stroke="#777" stroke-width="1.4" />
<path d="M1063.2 79.5 v6.5 M1060.6 83.3 l2.6 2.7 l2.6 -2.7" fill="none" stroke="#3f7fc5" stroke-width="1.3" />
<text x="1072.90" y="86.7" fill="#444444" text-anchor="start" style='font-family:"Liberation Sans", sans-serif;font-size:10.8px;font-weight:400;' textLength="39.70" lengthAdjust="spacingAndGlyphs" stroke="#444444" stroke-width="0.12">Ausfüllen</text>
<path d="M1115.4 82.0 h4 l-2 2 z" fill="#555" stroke="none" stroke-width="1" />
<path d="M1058.5 102 L1065 95.5 L1068.6 99 L1062 105.5 Z" fill="#e8738a" stroke="none" stroke-width="1" />
<line x1="1059.5" y1="103" x2="1061.8" y2="105.2" stroke="#f3f3f3" stroke-width="0.7" />
<text x="1072.90" y="104.3" fill="#444444" text-anchor="start" style='font-family:"Liberation Sans", sans-serif;font-size:10.8px;font-weight:400;' textLength="34.50" lengthAdjust="spacingAndGlyphs" stroke="#444444" stroke-width="0.12">Löschen</text>
<path d="M1110.3 99.8 h4 l-2 2 z" fill="#555" stroke="none" stroke-width="1" />
<text x="1161.00" y="69.7" fill="#3f7fc5" text-anchor="start" style='font-family:"Liberation Sans", sans-serif;font-size:11.5px;font-weight:400;' textLength="8.20" lengthAdjust="spacingAndGlyphs" >A</text>
<text x="1161.20" y="81" fill="#9b4fc2" text-anchor="start" style='font-family:"Liberation Sans", sans-serif;font-size:11.5px;font-weight:400;' textLength="8.00" lengthAdjust="spacingAndGlyphs" >Z</text>
<path d="M1171.7 65 H1184 L1179.5 70.5 V76.6 L1176.2 74.5 V70.5 Z" fill="#666" stroke="none" stroke-width="1" />
<text x="1142.60" y="97.0" fill="#444444" text-anchor="start" style='font-family:"Liberation Sans", sans-serif;font-size:10.8px;font-weight:400;' textLength="58.30" lengthAdjust="spacingAndGlyphs" stroke="#444444" stroke-width="0.12">Sortieren und</text>
<text x="1155.40" y="110.1" fill="#444444" text-anchor="start" style='font-family:"Liberation Sans", sans-serif;font-size:10.8px;font-weight:400;' textLength="26.60" lengthAdjust="spacingAndGlyphs" stroke="#444444" stroke-width="0.12">Filtern</text>
<path d="M1184.7 104.7 h4 l-2 2 z" fill="#555" stroke="none" stroke-width="1" />
<circle cx="1235.2" cy="67.8" r="7.3" fill="none" stroke="#3f7fc5" stroke-width="2"/>
<line x1="1229.8" y1="73.2" x2="1222.8" y2="80.4" stroke="#3f7fc5" stroke-width="2.6" stroke-linecap="round"/>
<text x="1207.10" y="97.0" fill="#444444" text-anchor="start" style='font-family:"Liberation Sans", sans-serif;font-size:10.8px;font-weight:400;' textLength="49.90" lengthAdjust="spacingAndGlyphs" stroke="#444444" stroke-width="0.12">Suchen und</text>
<text x="1205.30" y="110.1" fill="#444444" text-anchor="start" style='font-family:"Liberation Sans", sans-serif;font-size:10.8px;font-weight:400;' textLength="46.60" lengthAdjust="spacingAndGlyphs" stroke="#444444" stroke-width="0.12">Auswählen</text>
<path d="M1255 104.7 h4 l-2 2 z" fill="#555" stroke="none" stroke-width="1" />
<text x="1137.20" y="124.7" fill="#444444" text-anchor="start" style='font-family:"Liberation Sans", sans-serif;font-size:9.8px;font-weight:400;' textLength="40.80" lengthAdjust="spacingAndGlyphs" stroke="#444444" stroke-width="0.12">Bearbeiten</text>
<rect x="1264" y="57" width="1" height="68" fill="#dadada" />
<path d="M1297 123 l3.5 -3.5 l3.5 3.5" fill="none" stroke="#555" stroke-width="1.2" />
<rect x="31" y="128.3" width="1280" height="520" fill="#e6e6e6" />
<rect x="35.5" y="136.8" width="83.5" height="19.2" fill="#ffffff" stroke="#d0d0d0" stroke-width="1"/>
<text x="39.60" y="151.2" fill="#333" text-anchor="start" style='font-family:"Liberation Sans", sans-serif;font-size:10.5px;font-weight:400;' textLength="12.50" lengthAdjust="spacingAndGlyphs" >A2</text>
<path d="M108.8 144.9 h4.4 l-2.2 2.2 z" fill="#666" stroke="none" stroke-width="1" />
<rect x="131.2" y="142.3" width="1.3" height="1.4" fill="#888" />
<rect x="131.2" y="145.8" width="1.3" height="1.4" fill="#888" />
<rect x="131.2" y="149.3" width="1.3" height="1.4" fill="#888" />
<rect x="144.6" y="136.8" width="90.7" height="19.2" fill="#ffffff" stroke="#d6d6d6" stroke-width="1"/>
<path d="M155.5 142.5 L163 150 M163 142.5 L155.5 150" fill="none" stroke="#a6a6a6" stroke-width="1.1" />
<path d="M185.5 146.5 L188.5 149.7 L194 142.7" fill="none" stroke="#a6a6a6" stroke-width="1.1" />
<text x="214.50" y="150.7" fill="#555" text-anchor="start" style='font-family:"Liberation Serif", serif;font-size:12px;font-weight:400;font-style:italic' textLength="5.00" lengthAdjust="spacingAndGlyphs" >f</text>
<text x="219.50" y="151.2" fill="#555" text-anchor="start" style='font-family:"Liberation Serif", serif;font-size:9px;font-weight:400;font-style:italic' textLength="5.00" lengthAdjust="spacingAndGlyphs" >x</text>
<rect x="238" y="136.8" width="1068.5" height="51.7" fill="#ffffff" stroke="#d6d6d6" stroke-width="1"/>
<text x="247.00" y="151.2" fill="#333" text-anchor="start" style='font-family:"Liberation Sans", sans-serif;font-size:12.3px;font-weight:400;' textLength="24.70" lengthAdjust="spacingAndGlyphs" >A015</text>
<path d="M1296.8 148.5 l3.4 -3.4 l3.4 3.4" fill="none" stroke="#555" stroke-width="1.5" />
<rect x="31" y="196.5" width="1263" height="15" fill="#e6e6e6" />
<rect x="53.5" y="196.5" width="1240.5" height="15" fill="#d2d2d2" />
<path d="M40.5 209.5 H51.5 V198.5 Z" fill="#b9b9b9" stroke="none" stroke-width="1" />
<text x="82.34" y="208.3" fill="#217346" text-anchor="start" style='font-family:"Liberation Sans", sans-serif;font-size:10.2px;font-weight:400;' textLength="6.32" lengthAdjust="spacingAndGlyphs" >A</text>
<text x="146.34" y="208.3" fill="#217346" text-anchor="start" style='font-family:"Liberation Sans", sans-serif;font-size:10.2px;font-weight:400;' textLength="6.32" lengthAdjust="spacingAndGlyphs" >B</text>
<rect x="117.0" y="196.5" width="1" height="14.5" fill="#bcbcbc" />
<text x="210.08" y="208.3" fill="#217346" text-anchor="start" style='font-family:"Liberation Sans", sans-serif;font-size:10.2px;font-weight:400;' textLength="6.84" lengthAdjust="spacingAndGlyphs" >C</text>
<rect x="181.0" y="196.5" width="1" height="14.5" fill="#bcbcbc" />
<text x="274.08" y="208.3" fill="#217346" text-anchor="start" style='font-family:"Liberation Sans", sans-serif;font-size:10.2px;font-weight:400;' textLength="6.84" lengthAdjust="spacingAndGlyphs" >D</text>
<rect x="245.0" y="196.5" width="1" height="14.5" fill="#bcbcbc" />
<text x="338.34" y="208.3" fill="#217346" text-anchor="start" style='font-family:"Liberation Sans", sans-serif;font-size:10.2px;font-weight:400;' textLength="6.32" lengthAdjust="spacingAndGlyphs" >E</text>
<rect x="309.0" y="196.5" width="1" height="14.5" fill="#bcbcbc" />
<text x="402.61" y="208.3" fill="#217346" text-anchor="start" style='font-family:"Liberation Sans", sans-serif;font-size:10.2px;font-weight:400;' textLength="5.79" lengthAdjust="spacingAndGlyphs" >F</text>
<rect x="373.0" y="196.5" width="1" height="14.5" fill="#bcbcbc" />
<text x="465.82" y="208.3" fill="#217346" text-anchor="start" style='font-family:"Liberation Sans", sans-serif;font-size:10.2px;font-weight:400;' textLength="7.37" lengthAdjust="spacingAndGlyphs" >G</text>
<rect x="437.0" y="196.5" width="1" height="14.5" fill="#bcbcbc" />
<text x="530.08" y="208.3" fill="#217346" text-anchor="start" style='font-family:"Liberation Sans", sans-serif;font-size:10.2px;font-weight:400;' textLength="6.84" lengthAdjust="spacingAndGlyphs" >H</text>
<rect x="501.0" y="196.5" width="1" height="14.5" fill="#bcbcbc" />
<text x="596.18" y="208.3" fill="#217346" text-anchor="start" style='font-family:"Liberation Sans", sans-serif;font-size:10.2px;font-weight:400;' textLength="2.63" lengthAdjust="spacingAndGlyphs" >I</text>
<rect x="565.0" y="196.5" width="1" height="14.5" fill="#bcbcbc" />
<text x="659.13" y="208.3" fill="#217346" text-anchor="start" style='font-family:"Liberation Sans", sans-serif;font-size:10.2px;font-weight:400;' textLength="4.74" lengthAdjust="spacingAndGlyphs" >J</text>
<rect x="629.0" y="196.5" width="1" height="14.5" fill="#bcbcbc" />
<text x="722.34" y="208.3" fill="#217346" text-anchor="start" style='font-family:"Liberation Sans", sans-serif;font-size:10.2px;font-weight:400;' textLength="6.32" lengthAdjust="spacingAndGlyphs" >K</text>
<rect x="693.0" y="196.5" width="1" height="14.5" fill="#bcbcbc" />
<text x="786.87" y="208.3" fill="#217346" text-anchor="start" style='font-family:"Liberation Sans", sans-serif;font-size:10.2px;font-weight:400;' textLength="5.27" lengthAdjust="spacingAndGlyphs" >L</text>
<rect x="757.0" y="196.5" width="1" height="14.5" fill="#bcbcbc" />
<text x="849.55" y="208.3" fill="#217346" text-anchor="start" style='font-family:"Liberation Sans", sans-serif;font-size:10.2px;font-weight:400;' textLength="7.89" lengthAdjust="spacingAndGlyphs" >M</text>
<rect x="821.0" y="196.5" width="1" height="14.5" fill="#bcbcbc" />
<text x="914.03" y="208.3" fill="#217346" text-anchor="start" style='font-family:"Liberation Sans", sans-serif;font-size:10.2px;font-weight:400;' textLength="6.84" lengthAdjust="spacingAndGlyphs" >N</text>
<rect x="885.0" y="196.5" width="1" height="14.5" fill="#bcbcbc" />
<text x="980.37" y="208.3" fill="#217346" text-anchor="start" style='font-family:"Liberation Sans", sans-serif;font-size:10.2px;font-weight:400;' textLength="7.37" lengthAdjust="spacingAndGlyphs" >O</text>
<rect x="948.9" y="196.5" width="1" height="14.5" fill="#bcbcbc" />
<text x="1050.24" y="208.3" fill="#217346" text-anchor="start" style='font-family:"Liberation Sans", sans-serif;font-size:10.2px;font-weight:400;' textLength="6.32" lengthAdjust="spacingAndGlyphs" >P</text>
<rect x="1018.2" y="196.5" width="1" height="14.5" fill="#bcbcbc" />
<text x="1119.12" y="208.3" fill="#217346" text-anchor="start" style='font-family:"Liberation Sans", sans-serif;font-size:10.2px;font-weight:400;' textLength="7.37" lengthAdjust="spacingAndGlyphs" >Q</text>
<rect x="1087.6" y="196.5" width="1" height="14.5" fill="#bcbcbc" />
<text x="1188.73" y="208.3" fill="#217346" text-anchor="start" style='font-family:"Liberation Sans", sans-serif;font-size:10.2px;font-weight:400;' textLength="6.84" lengthAdjust="spacingAndGlyphs" >R</text>
<rect x="1157.0" y="196.5" width="1" height="14.5" fill="#bcbcbc" />
<text x="1257.24" y="208.3" fill="#217346" text-anchor="start" style='font-family:"Liberation Sans", sans-serif;font-size:10.2px;font-weight:400;' textLength="6.32" lengthAdjust="spacingAndGlyphs" >S</text>
<rect x="1226.3" y="196.5" width="1" height="14.5" fill="#bcbcbc" />
<rect x="53" y="211.0" width="1241" height="1.9" fill="#217346" />
<rect x="53.5" y="212.5" width="1240.5" height="435.5" fill="#ffffff" />
<rect x="31" y="211.5" width="22" height="16" fill="#e6e6e6" />
<rect x="31" y="226.4" width="22" height="1.7" fill="#c8d5cd" />
<text x="39.03" y="224.2" fill="#444" text-anchor="start" style='font-family:"Liberation Sans", sans-serif;font-size:11.5px;font-weight:400;' textLength="5.95" lengthAdjust="spacingAndGlyphs" stroke="#444" stroke-width="0.2">1</text>
<rect x="31" y="227.5" width="22" height="16" fill="#d3ecdf" />
<rect x="31" y="242.4" width="22" height="1.7" fill="#c8d5cd" />
<text x="39.03" y="240.2" fill="#217346" text-anchor="start" style='font-family:"Liberation Sans", sans-serif;font-size:11.5px;font-weight:400;' textLength="5.95" lengthAdjust="spacingAndGlyphs" stroke="#217346" stroke-width="0.2">2</text>
<rect x="31" y="243.5" width="22" height="16" fill="#d3ecdf" />
<rect x="31" y="258.4" width="22" height="1.7" fill="#c8d5cd" />
<text x="39.03" y="256.2" fill="#217346" text-anchor="start" style='font-family:"Liberation Sans", sans-serif;font-size:11.5px;font-weight:400;' textLength="5.95" lengthAdjust="spacingAndGlyphs" stroke="#217346" stroke-width="0.2">3</text>
<rect x="31" y="259.5" width="22" height="16" fill="#d3ecdf" />
<rect x="31" y="274.4" width="22" height="1.7" fill="#c8d5cd" />
<text x="39.03" y="272.2" fill="#217346" text-anchor="start" style='font-family:"Liberation Sans", sans-serif;font-size:11.5px;font-weight:400;' textLength="5.95" lengthAdjust="spacingAndGlyphs" stroke="#217346" stroke-width="0.2">4</text>
<rect x="31" y="275.5" width="22" height="16" fill="#d3ecdf" />
<rect x="31" y="290.4" width="22" height="1.7" fill="#c8d5cd" />
<text x="39.03" y="288.2" fill="#217346" text-anchor="start" style='font-family:"Liberation Sans", sans-serif;font-size:11.5px;font-weight:400;' textLength="5.95" lengthAdjust="spacingAndGlyphs" stroke="#217346" stroke-width="0.2">5</text>
<rect x="31" y="291.5" width="22" height="16" fill="#d3ecdf" />
<rect x="31" y="306.4" width="22" height="1.7" fill="#c8d5cd" />
<text x="39.03" y="304.2" fill="#217346" text-anchor="start" style='font-family:"Liberation Sans", sans-serif;font-size:11.5px;font-weight:400;' textLength="5.95" lengthAdjust="spacingAndGlyphs" stroke="#217346" stroke-width="0.2">6</text>
<rect x="31" y="307.5" width="22" height="16" fill="#d3ecdf" />
<rect x="31" y="322.4" width="22" height="1.7" fill="#c8d5cd" />
<text x="39.03" y="320.2" fill="#217346" text-anchor="start" style='font-family:"Liberation Sans", sans-serif;font-size:11.5px;font-weight:400;' textLength="5.95" lengthAdjust="spacingAndGlyphs" stroke="#217346" stroke-width="0.2">7</text>
<rect x="31" y="323.5" width="22" height="16" fill="#d3ecdf" />
<rect x="31" y="338.4" width="22" height="1.7" fill="#c8d5cd" />
<text x="39.03" y="336.2" fill="#217346" text-anchor="start" style='font-family:"Liberation Sans", sans-serif;font-size:11.5px;font-weight:400;' textLength="5.95" lengthAdjust="spacingAndGlyphs" stroke="#217346" stroke-width="0.2">8</text>
<rect x="31" y="339.5" width="22" height="16" fill="#d3ecdf" />
<rect x="31" y="354.4" width="22" height="1.7" fill="#c8d5cd" />
<text x="39.03" y="352.2" fill="#217346" text-anchor="start" style='font-family:"Liberation Sans", sans-serif;font-size:11.5px;font-weight:400;' textLength="5.95" lengthAdjust="spacingAndGlyphs" stroke="#217346" stroke-width="0.2">9</text>
<rect x="31" y="355.5" width="22" height="16" fill="#d3ecdf" />
<rect x="31" y="370.4" width="22" height="1.7" fill="#c8d5cd" />
<text x="36.05" y="368.2" fill="#217346" text-anchor="start" style='font-family:"Liberation Sans", sans-serif;font-size:11.5px;font-weight:400;' textLength="11.90" lengthAdjust="spacingAndGlyphs" stroke="#217346" stroke-width="0.2">10</text>
<rect x="31" y="371.5" width="22" height="16" fill="#d3ecdf" />
<rect x="31" y="386.4" width="22" height="1.7" fill="#c8d5cd" />
<text x="36.45" y="384.2" fill="#217346" text-anchor="start" style='font-family:"Liberation Sans", sans-serif;font-size:11.5px;font-weight:400;' textLength="11.10" lengthAdjust="spacingAndGlyphs" stroke="#217346" stroke-width="0.2">11</text>
<rect x="31" y="387.5" width="22" height="16" fill="#e6e6e6" />
<rect x="31" y="402.6" width="22" height="1.1" fill="#d4d4d4" />
<text x="36.05" y="400.2" fill="#444" text-anchor="start" style='font-family:"Liberation Sans", sans-serif;font-size:11.5px;font-weight:400;' textLength="11.90" lengthAdjust="spacingAndGlyphs" stroke="#444" stroke-width="0.2">12</text>
<rect x="31" y="403.5" width="22" height="16" fill="#e6e6e6" />
<rect x="31" y="418.6" width="22" height="1.1" fill="#d4d4d4" />
<text x="36.05" y="416.2" fill="#444" text-anchor="start" style='font-family:"Liberation Sans", sans-serif;font-size:11.5px;font-weight:400;' textLength="11.90" lengthAdjust="spacingAndGlyphs" stroke="#444" stroke-width="0.2">13</text>
<rect x="31" y="419.5" width="22" height="16" fill="#e6e6e6" />
<rect x="31" y="434.6" width="22" height="1.1" fill="#d4d4d4" />
<text x="36.05" y="432.2" fill="#444" text-anchor="start" style='font-family:"Liberation Sans", sans-serif;font-size:11.5px;font-weight:400;' textLength="11.90" lengthAdjust="spacingAndGlyphs" stroke="#444" stroke-width="0.2">14</text>
<rect x="31" y="435.5" width="22" height="16" fill="#e6e6e6" />
<rect x="31" y="450.6" width="22" height="1.1" fill="#d4d4d4" />
<text x="36.05" y="448.2" fill="#444" text-anchor="start" style='font-family:"Liberation Sans", sans-serif;font-size:11.5px;font-weight:400;' textLength="11.90" lengthAdjust="spacingAndGlyphs" stroke="#444" stroke-width="0.2">15</text>
<rect x="31" y="451.5" width="22" height="16" fill="#e6e6e6" />
<rect x="31" y="466.6" width="22" height="1.1" fill="#d4d4d4" />
<text x="36.05" y="464.2" fill="#444" text-anchor="start" style='font-family:"Liberation Sans", sans-serif;font-size:11.5px;font-weight:400;' textLength="11.90" lengthAdjust="spacingAndGlyphs" stroke="#444" stroke-width="0.2">16</text>
<rect x="31" y="467.5" width="22" height="16" fill="#e6e6e6" />
<rect x="31" y="482.6" width="22" height="1.1" fill="#d4d4d4" />
<text x="36.05" y="480.2" fill="#444" text-anchor="start" style='font-family:"Liberation Sans", sans-serif;font-size:11.5px;font-weight:400;' textLength="11.90" lengthAdjust="spacingAndGlyphs" stroke="#444" stroke-width="0.2">17</text>
<rect x="31" y="483.5" width="22" height="16" fill="#e6e6e6" />
<rect x="31" y="498.6" width="22" height="1.1" fill="#d4d4d4" />
<text x="36.05" y="496.2" fill="#444" text-anchor="start" style='font-family:"Liberation Sans", sans-serif;font-size:11.5px;font-weight:400;' textLength="11.90" lengthAdjust="spacingAndGlyphs" stroke="#444" stroke-width="0.2">18</text>
<rect x="31" y="499.5" width="22" height="16" fill="#e6e6e6" />
<rect x="31" y="514.6" width="22" height="1.1" fill="#d4d4d4" />
<text x="36.05" y="512.2" fill="#444" text-anchor="start" style='font-family:"Liberation Sans", sans-serif;font-size:11.5px;font-weight:400;' textLength="11.90" lengthAdjust="spacingAndGlyphs" stroke="#444" stroke-width="0.2">19</text>
<rect x="31" y="515.5" width="22" height="16" fill="#e6e6e6" />
<rect x="31" y="530.6" width="22" height="1.1" fill="#d4d4d4" />
<text x="36.05" y="528.2" fill="#444" text-anchor="start" style='font-family:"Liberation Sans", sans-serif;font-size:11.5px;font-weight:400;' textLength="11.90" lengthAdjust="spacingAndGlyphs" stroke="#444" stroke-width="0.2">20</text>
<rect x="31" y="531.5" width="22" height="16" fill="#e6e6e6" />
<rect x="31" y="546.6" width="22" height="1.1" fill="#d4d4d4" />
<text x="36.05" y="544.2" fill="#444" text-anchor="start" style='font-family:"Liberation Sans", sans-serif;font-size:11.5px;font-weight:400;' textLength="11.90" lengthAdjust="spacingAndGlyphs" stroke="#444" stroke-width="0.2">21</text>
<rect x="31" y="547.5" width="22" height="16" fill="#e6e6e6" />
<rect x="31" y="562.6" width="22" height="1.1" fill="#d4d4d4" />
<text x="36.05" y="560.2" fill="#444" text-anchor="start" style='font-family:"Liberation Sans", sans-serif;font-size:11.5px;font-weight:400;' textLength="11.90" lengthAdjust="spacingAndGlyphs" stroke="#444" stroke-width="0.2">22</text>
<rect x="31" y="563.5" width="22" height="16" fill="#e6e6e6" />
<rect x="31" y="578.6" width="22" height="1.1" fill="#d4d4d4" />
<text x="36.05" y="576.2" fill="#444" text-anchor="start" style='font-family:"Liberation Sans", sans-serif;font-size:11.5px;font-weight:400;' textLength="11.90" lengthAdjust="spacingAndGlyphs" stroke="#444" stroke-width="0.2">23</text>
<rect x="31" y="579.5" width="22" height="16" fill="#e6e6e6" />
<rect x="31" y="594.6" width="22" height="1.1" fill="#d4d4d4" />
<text x="36.05" y="592.2" fill="#444" text-anchor="start" style='font-family:"Liberation Sans", sans-serif;font-size:11.5px;font-weight:400;' textLength="11.90" lengthAdjust="spacingAndGlyphs" stroke="#444" stroke-width="0.2">24</text>
<rect x="31" y="595.5" width="22" height="16" fill="#e6e6e6" />
<rect x="31" y="610.6" width="22" height="1.1" fill="#d4d4d4" />
<text x="36.05" y="608.2" fill="#444" text-anchor="start" style='font-family:"Liberation Sans", sans-serif;font-size:11.5px;font-weight:400;' textLength="11.90" lengthAdjust="spacingAndGlyphs" stroke="#444" stroke-width="0.2">25</text>
<rect x="31" y="611.5" width="22" height="16" fill="#e6e6e6" />
<rect x="31" y="626.6" width="22" height="1.1" fill="#d4d4d4" />
<text x="36.05" y="624.2" fill="#444" text-anchor="start" style='font-family:"Liberation Sans", sans-serif;font-size:11.5px;font-weight:400;' textLength="11.90" lengthAdjust="spacingAndGlyphs" stroke="#444" stroke-width="0.2">26</text>
<rect x="31" y="627.5" width="22" height="16" fill="#e6e6e6" />
<rect x="31" y="642.6" width="22" height="1.1" fill="#d4d4d4" />
<text x="36.05" y="640.2" fill="#444" text-anchor="start" style='font-family:"Liberation Sans", sans-serif;font-size:11.5px;font-weight:400;' textLength="11.90" lengthAdjust="spacingAndGlyphs" stroke="#444" stroke-width="0.2">27</text>
<rect x="31" y="643.5" width="22" height="16" fill="#e6e6e6" />
<rect x="31" y="658.6" width="22" height="1.1" fill="#d4d4d4" />
<rect x="52.3" y="211" width="1.4" height="437" fill="#c6c6c6" />
<rect x="52.2" y="227.0" width="1.9" height="160.0" fill="#3d8c5f" />
<rect x="53.5" y="227.0" width="1240.5" height="160.0" fill="#c6c6c6" />
<rect x="53.5" y="227.0" width="64" height="16.0" fill="#ffffff" />
<rect x="1018.2" y="212.5" width="1" height="435.5" fill="#d4d4d4" />
<rect x="1087.6" y="212.5" width="1" height="435.5" fill="#d4d4d4" />
<rect x="1157.0" y="212.5" width="1" height="435.5" fill="#d4d4d4" />
<rect x="1226.3" y="212.5" width="1" height="435.5" fill="#d4d4d4" />
<rect x="949.5" y="227.3" width="344" height="1" fill="#b8b8b8" />
<rect x="949.5" y="243.3" width="344" height="1" fill="#b8b8b8" />
<rect x="949.5" y="259.3" width="344" height="1" fill="#b8b8b8" />
<rect x="949.5" y="275.3" width="344" height="1" fill="#b8b8b8" />
<rect x="949.5" y="291.3" width="344" height="1" fill="#b8b8b8" />
<rect x="949.5" y="307.3" width="344" height="1" fill="#b8b8b8" />
<rect x="949.5" y="323.3" width="344" height="1" fill="#b8b8b8" />
<rect x="949.5" y="339.3" width="344" height="1" fill="#b8b8b8" />
<rect x="949.5" y="355.3" width="344" height="1" fill="#b8b8b8" />
<rect x="949.5" y="371.3" width="344" height="1" fill="#b8b8b8" />
<rect x="949.5" y="387.3" width="344" height="1" fill="#b8b8b8" />
<rect x="949.5" y="403.3" width="344" height="1" fill="#dcdcdc" />
<rect x="949.5" y="419.3" width="344" height="1" fill="#dcdcdc" />
<rect x="949.5" y="435.3" width="344" height="1" fill="#dcdcdc" />
<rect x="949.5" y="451.3" width="344" height="1" fill="#dcdcdc" />
<rect x="949.5" y="467.3" width="344" height="1" fill="#dcdcdc" />
<rect x="949.5" y="483.3" width="344" height="1" fill="#dcdcdc" />
<rect x="949.5" y="499.3" width="344" height="1" fill="#dcdcdc" />
<rect x="949.5" y="515.3" width="344" height="1" fill="#dcdcdc" />
<rect x="949.5" y="531.3" width="344" height="1" fill="#dcdcdc" />
<rect x="949.5" y="547.3" width="344" height="1" fill="#dcdcdc" />
<rect x="949.5" y="563.3" width="344" height="1" fill="#dcdcdc" />
<rect x="949.5" y="579.3" width="344" height="1" fill="#dcdcdc" />
<rect x="949.5" y="595.3" width="344" height="1" fill="#dcdcdc" />
<rect x="949.5" y="611.3" width="344" height="1" fill="#dcdcdc" />
<rect x="949.5" y="627.3" width="344" height="1" fill="#dcdcdc" />
<rect x="949.5" y="643.3" width="344" height="1" fill="#dcdcdc" />
<rect x="1293.3" y="211" width="1.2" height="437" fill="#c6c6c6" />
<rect x="53.5" y="228.7" width="896" height="1.1" fill="#dcdcdc" />
<rect x="53.5" y="244.7" width="896" height="1.1" fill="#dcdcdc" />
<rect x="53.5" y="260.7" width="896" height="1.1" fill="#dcdcdc" />
<rect x="53.5" y="276.7" width="896" height="1.1" fill="#dcdcdc" />
<rect x="53.5" y="292.7" width="896" height="1.1" fill="#dcdcdc" />
<rect x="53.5" y="308.7" width="896" height="1.1" fill="#dcdcdc" />
<rect x="53.5" y="324.7" width="896" height="1.1" fill="#dcdcdc" />
<rect x="53.5" y="340.7" width="896" height="1.1" fill="#dcdcdc" />
<rect x="53.5" y="356.7" width="896" height="1.1" fill="#dcdcdc" />
<rect x="53.5" y="372.7" width="896" height="1.1" fill="#dcdcdc" />
<rect x="118.05000000000001" y="228.0" width="1" height="159.0" fill="#d4d4d4" />
<rect x="182.05" y="228.0" width="1" height="159.0" fill="#d4d4d4" />
<rect x="246.05" y="228.0" width="1" height="159.0" fill="#d4d4d4" />
<rect x="310.04999999999995" y="228.0" width="1" height="159.0" fill="#d4d4d4" />
<rect x="374.04999999999995" y="228.0" width="1" height="159.0" fill="#d4d4d4" />
<rect x="438.04999999999995" y="228.0" width="1" height="159.0" fill="#d4d4d4" />
<rect x="502.04999999999995" y="228.0" width="1" height="159.0" fill="#d4d4d4" />
<rect x="566.05" y="228.0" width="1" height="159.0" fill="#d4d4d4" />
<rect x="630.05" y="228.0" width="1" height="159.0" fill="#d4d4d4" />
<rect x="694.05" y="228.0" width="1" height="159.0" fill="#d4d4d4" />
<rect x="758.05" y="228.0" width="1" height="159.0" fill="#d4d4d4" />
<rect x="822.05" y="228.0" width="1" height="159.0" fill="#d4d4d4" />
<rect x="886.05" y="228.0" width="1" height="159.0" fill="#d4d4d4" />
<rect x="950.05" y="228.0" width="1" height="159.0" fill="#d4d4d4" />
<rect x="53.5" y="227.0" width="896" height="1.7" fill="#5e5e5e" />
<rect x="53.5" y="243.0" width="896" height="1.7" fill="#5e5e5e" />
<rect x="53.5" y="259.0" width="896" height="1.7" fill="#5e5e5e" />
<rect x="53.5" y="275.0" width="896" height="1.7" fill="#5e5e5e" />
<rect x="53.5" y="291.0" width="896" height="1.7" fill="#5e5e5e" />
<rect x="53.5" y="307.0" width="896" height="1.7" fill="#5e5e5e" />
<rect x="53.5" y="323.0" width="896" height="1.7" fill="#5e5e5e" />
<rect x="53.5" y="339.0" width="896" height="1.7" fill="#5e5e5e" />
<rect x="53.5" y="355.0" width="896" height="1.7" fill="#5e5e5e" />
<rect x="53.5" y="371.0" width="896" height="1.7" fill="#5e5e5e" />
<rect x="53.5" y="387.0" width="896" height="1.7" fill="#5e5e5e" />
<rect x="53.5" y="402.9" width="896" height="1.5" fill="#646464" />
<rect x="53.5" y="418.9" width="896" height="1.5" fill="#646464" />
<rect x="53.5" y="434.9" width="896" height="1.5" fill="#646464" />
<rect x="53.5" y="450.9" width="896" height="1.5" fill="#646464" />
<rect x="53.5" y="466.9" width="896" height="1.5" fill="#646464" />
<rect x="53.5" y="482.9" width="896" height="1.5" fill="#646464" />
<rect x="53.5" y="498.9" width="896" height="1.5" fill="#646464" />
<rect x="53.5" y="514.9" width="896" height="1.5" fill="#646464" />
<rect x="53.5" y="530.9" width="896" height="1.5" fill="#646464" />
<rect x="53.5" y="546.9" width="896" height="1.5" fill="#646464" />
<rect x="53.5" y="562.9" width="896" height="1.5" fill="#646464" />
<rect x="53.5" y="578.9" width="896" height="1.5" fill="#646464" />
<rect x="53.5" y="594.9" width="896" height="1.5" fill="#646464" />
<rect x="53.5" y="610.9" width="896" height="1.5" fill="#646464" />
<rect x="53.5" y="626.9" width="896" height="1.5" fill="#646464" />
<rect x="53.5" y="642.9" width="896" height="1.5" fill="#646464" />
<rect x="116.75" y="212.5" width="1.3" height="435.5" fill="#3c3c3c" />
<rect x="180.75" y="212.5" width="1.3" height="435.5" fill="#3c3c3c" />
<rect x="244.75" y="212.5" width="1.3" height="435.5" fill="#3c3c3c" />
<rect x="308.75" y="212.5" width="1.3" height="435.5" fill="#3c3c3c" />
<rect x="372.75" y="212.5" width="1.3" height="435.5" fill="#3c3c3c" />
<rect x="436.75" y="212.5" width="1.3" height="435.5" fill="#3c3c3c" />
<rect x="500.75" y="212.5" width="1.3" height="435.5" fill="#3c3c3c" />
<rect x="564.75" y="212.5" width="1.3" height="435.5" fill="#3c3c3c" />
<rect x="628.75" y="212.5" width="1.3" height="435.5" fill="#3c3c3c" />
<rect x="692.75" y="212.5" width="1.3" height="435.5" fill="#3c3c3c" />
<rect x="756.75" y="212.5" width="1.3" height="435.5" fill="#3c3c3c" />
<rect x="820.75" y="212.5" width="1.3" height="435.5" fill="#3c3c3c" />
<rect x="884.75" y="212.5" width="1.3" height="435.5" fill="#3c3c3c" />
<rect x="948.75" y="212.5" width="1.3" height="435.5" fill="#3c3c3c" />
<svg x="54.3" y="212.0" width="49.2" height="15" overflow="hidden"><g transform="translate(-54.3,-212.0)">
<text x="55.80" y="224.6" fill="#222" text-anchor="start" style='font-family:"Liberation Sans", sans-serif;font-size:11.2px;font-weight:400;' textLength="67.33" lengthAdjust="spacingAndGlyphs" stroke="#222" stroke-width="0.25">ArticleNumber</text>
</g></svg>
<svg x="118.3" y="212.0" width="49.2" height="15" overflow="hidden"><g transform="translate(-118.3,-212.0)">
<text x="119.80" y="224.6" fill="#222" text-anchor="start" style='font-family:"Liberation Sans", sans-serif;font-size:11.2px;font-weight:400;' textLength="19.49" lengthAdjust="spacingAndGlyphs" stroke="#222" stroke-width="0.25">Text</text>
</g></svg>
<svg x="182.3" y="212.0" width="49.2" height="15" overflow="hidden"><g transform="translate(-182.3,-212.0)">
<text x="183.80" y="224.6" fill="#222" text-anchor="start" style='font-family:"Liberation Sans", sans-serif;font-size:11.2px;font-weight:400;' textLength="44.89" lengthAdjust="spacingAndGlyphs" stroke="#222" stroke-width="0.25">ShortText</text>
</g></svg>
<svg x="246.3" y="212.0" width="49.2" height="15" overflow="hidden"><g transform="translate(-246.3,-212.0)">
<text x="247.80" y="224.6" fill="#222" text-anchor="start" style='font-family:"Liberation Sans", sans-serif;font-size:11.2px;font-weight:400;' textLength="18.90" lengthAdjust="spacingAndGlyphs" stroke="#222" stroke-width="0.25">Unit</text>
</g></svg>
<svg x="310.3" y="212.0" width="49.2" height="15" overflow="hidden"><g transform="translate(-310.3,-212.0)">
<text x="311.80" y="224.6" fill="#222" text-anchor="start" style='font-family:"Liberation Sans", sans-serif;font-size:11.2px;font-weight:400;' textLength="43.11" lengthAdjust="spacingAndGlyphs" stroke="#222" stroke-width="0.25">UnitPrice</text>
</g></svg>
<svg x="374.3" y="212.0" width="49.2" height="15" overflow="hidden"><g transform="translate(-374.3,-212.0)">
<text x="375.80" y="224.6" fill="#222" text-anchor="start" style='font-family:"Liberation Sans", sans-serif;font-size:11.2px;font-weight:400;' textLength="54.95" lengthAdjust="spacingAndGlyphs" stroke="#222" stroke-width="0.25">LabourCost</text>
</g></svg>
<svg x="438.3" y="212.0" width="49.2" height="15" overflow="hidden"><g transform="translate(-438.3,-212.0)">
<text x="439.80" y="224.6" fill="#222" text-anchor="start" style='font-family:"Liberation Sans", sans-serif;font-size:11.2px;font-weight:400;' textLength="59.65" lengthAdjust="spacingAndGlyphs" stroke="#222" stroke-width="0.25">MaterialCost</text>
</g></svg>
<svg x="502.3" y="212.0" width="49.2" height="15" overflow="hidden"><g transform="translate(-502.3,-212.0)">
<text x="503.80" y="224.6" fill="#222" text-anchor="start" style='font-family:"Liberation Sans", sans-serif;font-size:11.2px;font-weight:400;' textLength="69.11" lengthAdjust="spacingAndGlyphs" stroke="#222" stroke-width="0.25">PurchasePrice</text>
</g></svg>
<svg x="566.3" y="212.0" width="49.2" height="15" overflow="hidden"><g transform="translate(-566.3,-212.0)">
<text x="567.80" y="224.6" fill="#222" text-anchor="start" style='font-family:"Liberation Sans", sans-serif;font-size:11.2px;font-weight:400;' textLength="59.07" lengthAdjust="spacingAndGlyphs" stroke="#222" stroke-width="0.25">ArticleGroup</text>
</g></svg>
<svg x="630.3" y="212.0" width="49.2" height="15" overflow="hidden"><g transform="translate(-630.3,-212.0)">
<text x="631.80" y="224.6" fill="#222" text-anchor="start" style='font-family:"Liberation Sans", sans-serif;font-size:11.2px;font-weight:400;' textLength="77.98" lengthAdjust="spacingAndGlyphs" stroke="#222" stroke-width="0.25">ArticleSubGroup</text>
</g></svg>
<svg x="694.3" y="212.0" width="49.2" height="15" overflow="hidden"><g transform="translate(-694.3,-212.0)">
<text x="695.80" y="224.6" fill="#222" text-anchor="start" style='font-family:"Liberation Sans", sans-serif;font-size:11.2px;font-weight:400;' textLength="23.04" lengthAdjust="spacingAndGlyphs" stroke="#222" stroke-width="0.25">Type</text>
</g></svg>
<svg x="758.3" y="212.0" width="49.2" height="15" overflow="hidden"><g transform="translate(-758.3,-212.0)">
<text x="759.80" y="224.6" fill="#222" text-anchor="start" style='font-family:"Liberation Sans", sans-serif;font-size:11.2px;font-weight:400;' textLength="72.65" lengthAdjust="spacingAndGlyphs" stroke="#222" stroke-width="0.25">ArticleCategory</text>
</g></svg>
<svg x="822.3" y="212.0" width="49.2" height="15" overflow="hidden"><g transform="translate(-822.3,-212.0)">
<text x="823.80" y="224.6" fill="#222" text-anchor="start" style='font-family:"Liberation Sans", sans-serif;font-size:11.2px;font-weight:400;' textLength="82.69" lengthAdjust="spacingAndGlyphs" stroke="#222" stroke-width="0.25">ArticleDescription</text>
</g></svg>
<svg x="886.3" y="212.0" width="49.09999999999998" height="15" overflow="hidden"><g transform="translate(-886.3,-212.0)">
<text x="887.80" y="224.6" fill="#222" text-anchor="start" style='font-family:"Liberation Sans", sans-serif;font-size:11.2px;font-weight:400;' textLength="56.11" lengthAdjust="spacingAndGlyphs" stroke="#222" stroke-width="0.25">ShowArticle</text>
</g></svg>
<svg x="944" y="212.0" width="70" height="15" overflow="hidden"><g transform="translate(-944,-212.0)">
<text x="945.20" y="224.6" fill="#222" text-anchor="start" style='font-family:"Liberation Sans", sans-serif;font-size:11.2px;font-weight:400;' textLength="53.16" lengthAdjust="spacingAndGlyphs" >Description</text>
</g></svg>
<svg x="54.3" y="228.0" width="62.2" height="15" overflow="hidden"><g transform="translate(-54.3,-228.0)">
<text x="55.80" y="240.6" fill="#222" text-anchor="start" style='font-family:"Liberation Sans", sans-serif;font-size:11.2px;font-weight:400;' textLength="24.82" lengthAdjust="spacingAndGlyphs" stroke="#222" stroke-width="0.25">A015</text>
</g></svg>
<svg x="118.3" y="228.0" width="62.2" height="15" overflow="hidden"><g transform="translate(-118.3,-228.0)">
<text x="119.80" y="240.6" fill="#222" text-anchor="start" style='font-family:"Liberation Sans", sans-serif;font-size:11.2px;font-weight:400;' textLength="106.35" lengthAdjust="spacingAndGlyphs" stroke="#222" stroke-width="0.25">Leckortungspauschale</text>
</g></svg>
<svg x="310.3" y="228.0" width="62.2" height="15" overflow="hidden"><g transform="translate(-310.3,-228.0)">
<text x="338.59" y="240.6" fill="#222" text-anchor="start" style='font-family:"Liberation Sans", sans-serif;font-size:11.2px;font-weight:400;' textLength="32.51" lengthAdjust="spacingAndGlyphs" stroke="#222" stroke-width="0.25">290,45</text>
</g></svg>
<svg x="374.3" y="228.0" width="62.2" height="15" overflow="hidden"><g transform="translate(-374.3,-228.0)">
<text x="429.19" y="240.6" fill="#222" text-anchor="start" style='font-family:"Liberation Sans", sans-serif;font-size:11.2px;font-weight:400;' textLength="5.91" lengthAdjust="spacingAndGlyphs" stroke="#222" stroke-width="0.25">0</text>
</g></svg>
<svg x="438.3" y="228.0" width="62.2" height="15" overflow="hidden"><g transform="translate(-438.3,-228.0)">
<text x="493.19" y="240.6" fill="#222" text-anchor="start" style='font-family:"Liberation Sans", sans-serif;font-size:11.2px;font-weight:400;' textLength="5.91" lengthAdjust="spacingAndGlyphs" stroke="#222" stroke-width="0.25">0</text>
</g></svg>
<svg x="502.3" y="228.0" width="62.2" height="15" overflow="hidden"><g transform="translate(-502.3,-228.0)">
<text x="557.19" y="240.6" fill="#222" text-anchor="start" style='font-family:"Liberation Sans", sans-serif;font-size:11.2px;font-weight:400;' textLength="5.91" lengthAdjust="spacingAndGlyphs" stroke="#222" stroke-width="0.25">0</text>
</g></svg>
<svg x="566.3" y="228.0" width="62.2" height="15" overflow="hidden"><g transform="translate(-566.3,-228.0)">
<text x="567.80" y="240.6" fill="#222" text-anchor="start" style='font-family:"Liberation Sans", sans-serif;font-size:11.2px;font-weight:400;' textLength="52.59" lengthAdjust="spacingAndGlyphs" stroke="#222" stroke-width="0.25">Leckortung</text>
</g></svg>
<svg x="630.3" y="228.0" width="62.2" height="15" overflow="hidden"><g transform="translate(-630.3,-228.0)">
<text x="631.80" y="240.6" fill="#222" text-anchor="start" style='font-family:"Liberation Sans", sans-serif;font-size:11.2px;font-weight:400;' textLength="55.54" lengthAdjust="spacingAndGlyphs" stroke="#222" stroke-width="0.25">Pauschalen</text>
</g></svg>
<svg x="694.3" y="228.0" width="62.2" height="15" overflow="hidden"><g transform="translate(-694.3,-228.0)">
<text x="749.19" y="240.6" fill="#222" text-anchor="start" style='font-family:"Liberation Sans", sans-serif;font-size:11.2px;font-weight:400;' textLength="5.91" lengthAdjust="spacingAndGlyphs" stroke="#222" stroke-width="0.25">1</text>
</g></svg>
<svg x="886.3" y="228.0" width="62.09999999999998" height="15" overflow="hidden"><g transform="translate(-886.3,-228.0)">
<text x="887.80" y="240.6" fill="#222" text-anchor="start" style='font-family:"Liberation Sans", sans-serif;font-size:11.2px;font-weight:400;' textLength="5.91" lengthAdjust="spacingAndGlyphs" stroke="#222" stroke-width="0.25">0</text>
</g></svg>
<svg x="54.3" y="244.0" width="62.2" height="15" overflow="hidden"><g transform="translate(-54.3,-244.0)">
<text x="55.80" y="256.6" fill="#222" text-anchor="start" style='font-family:"Liberation Sans", sans-serif;font-size:11.2px;font-weight:400;' textLength="24.82" lengthAdjust="spacingAndGlyphs" stroke="#222" stroke-width="0.25">A009</text>
</g></svg>
<svg x="118.3" y="244.0" width="62.2" height="15" overflow="hidden"><g transform="translate(-118.3,-244.0)">
<text x="119.80" y="256.6" fill="#222" text-anchor="start" style='font-family:"Liberation Sans", sans-serif;font-size:11.2px;font-weight:400;' textLength="90.41" lengthAdjust="spacingAndGlyphs" stroke="#222" stroke-width="0.25">Sanierung Planung</text>
</g></svg>
<svg x="182.3" y="244.0" width="62.2" height="15" overflow="hidden"><g transform="translate(-182.3,-244.0)">
<text x="183.80" y="256.6" fill="#222" text-anchor="start" style='font-family:"Liberation Sans", sans-serif;font-size:11.2px;font-weight:400;' textLength="90.41" lengthAdjust="spacingAndGlyphs" stroke="#222" stroke-width="0.25">Sanierung Planung</text>
</g></svg>
<svg x="310.3" y="244.0" width="62.2" height="15" overflow="hidden"><g transform="translate(-310.3,-244.0)">
<text x="353.37" y="256.6" fill="#222" text-anchor="start" style='font-family:"Liberation Sans", sans-serif;font-size:11.2px;font-weight:400;' textLength="17.73" lengthAdjust="spacingAndGlyphs" stroke="#222" stroke-width="0.25">120</text>
</g></svg>
<svg x="374.3" y="244.0" width="62.2" height="15" overflow="hidden"><g transform="translate(-374.3,-244.0)">
<text x="429.19" y="256.6" fill="#222" text-anchor="start" style='font-family:"Liberation Sans", sans-serif;font-size:11.2px;font-weight:400;' textLength="5.91" lengthAdjust="spacingAndGlyphs" stroke="#222" stroke-width="0.25">0</text>
</g></svg>
<svg x="438.3" y="244.0" width="62.2" height="15" overflow="hidden"><g transform="translate(-438.3,-244.0)">
<text x="493.19" y="256.6" fill="#222" text-anchor="start" style='font-family:"Liberation Sans", sans-serif;font-size:11.2px;font-weight:400;' textLength="5.91" lengthAdjust="spacingAndGlyphs" stroke="#222" stroke-width="0.25">0</text>
</g></svg>
<svg x="502.3" y="244.0" width="62.2" height="15" overflow="hidden"><g transform="translate(-502.3,-244.0)">
<text x="557.19" y="256.6" fill="#222" text-anchor="start" style='font-family:"Liberation Sans", sans-serif;font-size:11.2px;font-weight:400;' textLength="5.91" lengthAdjust="spacingAndGlyphs" stroke="#222" stroke-width="0.25">0</text>
</g></svg>
<svg x="566.3" y="244.0" width="62.2" height="15" overflow="hidden"><g transform="translate(-566.3,-244.0)">
<text x="567.80" y="256.6" fill="#222" text-anchor="start" style='font-family:"Liberation Sans", sans-serif;font-size:11.2px;font-weight:400;' textLength="48.45" lengthAdjust="spacingAndGlyphs" stroke="#222" stroke-width="0.25">Sanierung</text>
</g></svg>
<svg x="630.3" y="244.0" width="62.2" height="15" overflow="hidden"><g transform="translate(-630.3,-244.0)">
<text x="631.80" y="256.6" fill="#222" text-anchor="start" style='font-family:"Liberation Sans", sans-serif;font-size:11.2px;font-weight:400;' textLength="39.00" lengthAdjust="spacingAndGlyphs" stroke="#222" stroke-width="0.25">Planung</text>
</g></svg>
<svg x="694.3" y="244.0" width="62.2" height="15" overflow="hidden"><g transform="translate(-694.3,-244.0)">
<text x="749.19" y="256.6" fill="#222" text-anchor="start" style='font-family:"Liberation Sans", sans-serif;font-size:11.2px;font-weight:400;' textLength="5.91" lengthAdjust="spacingAndGlyphs" stroke="#222" stroke-width="0.25">1</text>
</g></svg>
<svg x="886.3" y="244.0" width="62.09999999999998" height="15" overflow="hidden"><g transform="translate(-886.3,-244.0)">
<text x="887.80" y="256.6" fill="#222" text-anchor="start" style='font-family:"Liberation Sans", sans-serif;font-size:11.2px;font-weight:400;' textLength="5.91" lengthAdjust="spacingAndGlyphs" stroke="#222" stroke-width="0.25">0</text>
</g></svg>
<svg x="54.3" y="260.0" width="62.2" height="15" overflow="hidden"><g transform="translate(-54.3,-260.0)">
<text x="55.80" y="272.6" fill="#222" text-anchor="start" style='font-family:"Liberation Sans", sans-serif;font-size:11.2px;font-weight:400;' textLength="24.82" lengthAdjust="spacingAndGlyphs" stroke="#222" stroke-width="0.25">A018</text>
</g></svg>
<svg x="118.3" y="260.0" width="62.2" height="15" overflow="hidden"><g transform="translate(-118.3,-260.0)">
<text x="119.80" y="272.6" fill="#222" text-anchor="start" style='font-family:"Liberation Sans", sans-serif;font-size:11.2px;font-weight:400;' textLength="95.11" lengthAdjust="spacingAndGlyphs" stroke="#222" stroke-width="0.25">Leckortung (Geräte)</text>
</g></svg>
<svg x="182.3" y="260.0" width="62.2" height="15" overflow="hidden"><g transform="translate(-182.3,-260.0)">
<text x="183.80" y="272.6" fill="#222" text-anchor="start" style='font-family:"Liberation Sans", sans-serif;font-size:11.2px;font-weight:400;' textLength="95.11" lengthAdjust="spacingAndGlyphs" stroke="#222" stroke-width="0.25">Leckortung (Geräte)</text>
</g></svg>
<svg x="310.3" y="260.0" width="62.2" height="15" overflow="hidden"><g transform="translate(-310.3,-260.0)">
<text x="359.28" y="272.6" fill="#222" text-anchor="start" style='font-family:"Liberation Sans", sans-serif;font-size:11.2px;font-weight:400;' textLength="11.82" lengthAdjust="spacingAndGlyphs" stroke="#222" stroke-width="0.25">85</text>
</g></svg>
<svg x="374.3" y="260.0" width="62.2" height="15" overflow="hidden"><g transform="translate(-374.3,-260.0)">
<text x="429.19" y="272.6" fill="#222" text-anchor="start" style='font-family:"Liberation Sans", sans-serif;font-size:11.2px;font-weight:400;' textLength="5.91" lengthAdjust="spacingAndGlyphs" stroke="#222" stroke-width="0.25">0</text>
</g></svg>
<svg x="438.3" y="260.0" width="62.2" height="15" overflow="hidden"><g transform="translate(-438.3,-260.0)">
<text x="493.19" y="272.6" fill="#222" text-anchor="start" style='font-family:"Liberation Sans", sans-serif;font-size:11.2px;font-weight:400;' textLength="5.91" lengthAdjust="spacingAndGlyphs" stroke="#222" stroke-width="0.25">0</text>
</g></svg>
<svg x="502.3" y="260.0" width="62.2" height="15" overflow="hidden"><g transform="translate(-502.3,-260.0)">
<text x="557.19" y="272.6" fill="#222" text-anchor="start" style='font-family:"Liberation Sans", sans-serif;font-size:11.2px;font-weight:400;' textLength="5.91" lengthAdjust="spacingAndGlyphs" stroke="#222" stroke-width="0.25">0</text>
</g></svg>
<svg x="566.3" y="260.0" width="62.2" height="15" overflow="hidden"><g transform="translate(-566.3,-260.0)">
<text x="567.80" y="272.6" fill="#222" text-anchor="start" style='font-family:"Liberation Sans", sans-serif;font-size:11.2px;font-weight:400;' textLength="52.59" lengthAdjust="spacingAndGlyphs" stroke="#222" stroke-width="0.25">Leckortung</text>
</g></svg>
<svg x="630.3" y="260.0" width="62.2" height="15" overflow="hidden"><g transform="translate(-630.3,-260.0)">
<text x="631.80" y="272.6" fill="#222" text-anchor="start" style='font-family:"Liberation Sans", sans-serif;font-size:11.2px;font-weight:400;' textLength="65.00" lengthAdjust="spacingAndGlyphs" stroke="#222" stroke-width="0.25">Stundensätze</text>
</g></svg>
<svg x="694.3" y="260.0" width="62.2" height="15" overflow="hidden"><g transform="translate(-694.3,-260.0)">
<text x="749.19" y="272.6" fill="#222" text-anchor="start" style='font-family:"Liberation Sans", sans-serif;font-size:11.2px;font-weight:400;' textLength="5.91" lengthAdjust="spacingAndGlyphs" stroke="#222" stroke-width="0.25">1</text>
</g></svg>
<svg x="886.3" y="260.0" width="62.09999999999998" height="15" overflow="hidden"><g transform="translate(-886.3,-260.0)">
<text x="887.80" y="272.6" fill="#222" text-anchor="start" style='font-family:"Liberation Sans", sans-serif;font-size:11.2px;font-weight:400;' textLength="5.91" lengthAdjust="spacingAndGlyphs" stroke="#222" stroke-width="0.25">0</text>
</g></svg>
<svg x="54.3" y="276.0" width="62.2" height="15" overflow="hidden"><g transform="translate(-54.3,-276.0)">
<text x="55.80" y="288.6" fill="#222" text-anchor="start" style='font-family:"Liberation Sans", sans-serif;font-size:11.2px;font-weight:400;' textLength="24.82" lengthAdjust="spacingAndGlyphs" stroke="#222" stroke-width="0.25">A010</text>
</g></svg>
<svg x="118.3" y="276.0" width="62.2" height="15" overflow="hidden"><g transform="translate(-118.3,-276.0)">
<text x="119.80" y="288.6" fill="#222" text-anchor="start" style='font-family:"Liberation Sans", sans-serif;font-size:11.2px;font-weight:400;' textLength="64.98" lengthAdjust="spacingAndGlyphs" stroke="#222" stroke-width="0.25">Malerarbeiten</text>
</g></svg>
<svg x="182.3" y="276.0" width="62.2" height="15" overflow="hidden"><g transform="translate(-182.3,-276.0)">
<text x="183.80" y="288.6" fill="#222" text-anchor="start" style='font-family:"Liberation Sans", sans-serif;font-size:11.2px;font-weight:400;' textLength="64.98" lengthAdjust="spacingAndGlyphs" stroke="#222" stroke-width="0.25">Malerarbeiten</text>
</g></svg>
<svg x="310.3" y="276.0" width="62.2" height="15" overflow="hidden"><g transform="translate(-310.3,-276.0)">
<text x="359.28" y="288.6" fill="#222" text-anchor="start" style='font-family:"Liberation Sans", sans-serif;font-size:11.2px;font-weight:400;' textLength="11.82" lengthAdjust="spacingAndGlyphs" stroke="#222" stroke-width="0.25">45</text>
</g></svg>
<svg x="374.3" y="276.0" width="62.2" height="15" overflow="hidden"><g transform="translate(-374.3,-276.0)">
<text x="429.19" y="288.6" fill="#222" text-anchor="start" style='font-family:"Liberation Sans", sans-serif;font-size:11.2px;font-weight:400;' textLength="5.91" lengthAdjust="spacingAndGlyphs" stroke="#222" stroke-width="0.25">0</text>
</g></svg>
<svg x="438.3" y="276.0" width="62.2" height="15" overflow="hidden"><g transform="translate(-438.3,-276.0)">
<text x="493.19" y="288.6" fill="#222" text-anchor="start" style='font-family:"Liberation Sans", sans-serif;font-size:11.2px;font-weight:400;' textLength="5.91" lengthAdjust="spacingAndGlyphs" stroke="#222" stroke-width="0.25">0</text>
</g></svg>
<svg x="502.3" y="276.0" width="62.2" height="15" overflow="hidden"><g transform="translate(-502.3,-276.0)">
<text x="557.19" y="288.6" fill="#222" text-anchor="start" style='font-family:"Liberation Sans", sans-serif;font-size:11.2px;font-weight:400;' textLength="5.91" lengthAdjust="spacingAndGlyphs" stroke="#222" stroke-width="0.25">0</text>
</g></svg>
<svg x="566.3" y="276.0" width="62.2" height="15" overflow="hidden"><g transform="translate(-566.3,-276.0)">
<text x="567.80" y="288.6" fill="#222" text-anchor="start" style='font-family:"Liberation Sans", sans-serif;font-size:11.2px;font-weight:400;' textLength="48.45" lengthAdjust="spacingAndGlyphs" stroke="#222" stroke-width="0.25">Sanierung</text>
</g></svg>
<svg x="630.3" y="276.0" width="62.2" height="15" overflow="hidden"><g transform="translate(-630.3,-276.0)">
<text x="631.80" y="288.6" fill="#222" text-anchor="start" style='font-family:"Liberation Sans", sans-serif;font-size:11.2px;font-weight:400;' textLength="64.98" lengthAdjust="spacingAndGlyphs" stroke="#222" stroke-width="0.25">Malerarbeiten</text>
</g></svg>
<svg x="694.3" y="276.0" width="62.2" height="15" overflow="hidden"><g transform="translate(-694.3,-276.0)">
<text x="749.19" y="288.6" fill="#222" text-anchor="start" style='font-family:"Liberation Sans", sans-serif;font-size:11.2px;font-weight:400;' textLength="5.91" lengthAdjust="spacingAndGlyphs" stroke="#222" stroke-width="0.25">1</text>
</g></svg>
<svg x="886.3" y="276.0" width="62.09999999999998" height="15" overflow="hidden"><g transform="translate(-886.3,-276.0)">
<text x="887.80" y="288.6" fill="#222" text-anchor="start" style='font-family:"Liberation Sans", sans-serif;font-size:11.2px;font-weight:400;' textLength="5.91" lengthAdjust="spacingAndGlyphs" stroke="#222" stroke-width="0.25">0</text>
</g></svg>
<svg x="54.3" y="292.0" width="62.2" height="15" overflow="hidden"><g transform="translate(-54.3,-292.0)">
<text x="55.80" y="304.6" fill="#222" text-anchor="start" style='font-family:"Liberation Sans", sans-serif;font-size:11.2px;font-weight:400;' textLength="24.82" lengthAdjust="spacingAndGlyphs" stroke="#222" stroke-width="0.25">A016</text>
</g></svg>
<svg x="118.3" y="292.0" width="62.2" height="15" overflow="hidden"><g transform="translate(-118.3,-292.0)">
<text x="119.80" y="304.6" fill="#222" text-anchor="start" style='font-family:"Liberation Sans", sans-serif;font-size:11.2px;font-weight:400;' textLength="64.98" lengthAdjust="spacingAndGlyphs" stroke="#222" stroke-width="0.25">Malerarbeiten</text>
</g></svg>
<svg x="182.3" y="292.0" width="62.2" height="15" overflow="hidden"><g transform="translate(-182.3,-292.0)">
<text x="183.80" y="304.6" fill="#222" text-anchor="start" style='font-family:"Liberation Sans", sans-serif;font-size:11.2px;font-weight:400;' textLength="64.98" lengthAdjust="spacingAndGlyphs" stroke="#222" stroke-width="0.25">Malerarbeiten</text>
</g></svg>
<svg x="310.3" y="292.0" width="62.2" height="15" overflow="hidden"><g transform="translate(-310.3,-292.0)">
<text x="359.28" y="304.6" fill="#222" text-anchor="start" style='font-family:"Liberation Sans", sans-serif;font-size:11.2px;font-weight:400;' textLength="11.82" lengthAdjust="spacingAndGlyphs" stroke="#222" stroke-width="0.25">40</text>
</g></svg>
<svg x="374.3" y="292.0" width="62.2" height="15" overflow="hidden"><g transform="translate(-374.3,-292.0)">
<text x="429.19" y="304.6" fill="#222" text-anchor="start" style='font-family:"Liberation Sans", sans-serif;font-size:11.2px;font-weight:400;' textLength="5.91" lengthAdjust="spacingAndGlyphs" stroke="#222" stroke-width="0.25">0</text>
</g></svg>
<svg x="438.3" y="292.0" width="62.2" height="15" overflow="hidden"><g transform="translate(-438.3,-292.0)">
<text x="493.19" y="304.6" fill="#222" text-anchor="start" style='font-family:"Liberation Sans", sans-serif;font-size:11.2px;font-weight:400;' textLength="5.91" lengthAdjust="spacingAndGlyphs" stroke="#222" stroke-width="0.25">0</text>
</g></svg>
<svg x="502.3" y="292.0" width="62.2" height="15" overflow="hidden"><g transform="translate(-502.3,-292.0)">
<text x="557.19" y="304.6" fill="#222" text-anchor="start" style='font-family:"Liberation Sans", sans-serif;font-size:11.2px;font-weight:400;' textLength="5.91" lengthAdjust="spacingAndGlyphs" stroke="#222" stroke-width="0.25">0</text>
</g></svg>
<svg x="566.3" y="292.0" width="62.2" height="15" overflow="hidden"><g transform="translate(-566.3,-292.0)">
<text x="567.80" y="304.6" fill="#222" text-anchor="start" style='font-family:"Liberation Sans", sans-serif;font-size:11.2px;font-weight:400;' textLength="29.53" lengthAdjust="spacingAndGlyphs" stroke="#222" stroke-width="0.25">GAEB</text>
</g></svg>
<svg x="630.3" y="292.0" width="62.2" height="15" overflow="hidden"><g transform="translate(-630.3,-292.0)">
<text x="631.80" y="304.6" fill="#222" text-anchor="start" style='font-family:"Liberation Sans", sans-serif;font-size:11.2px;font-weight:400;' textLength="3.54" lengthAdjust="spacingAndGlyphs" stroke="#222" stroke-width="0.25">-</text>
</g></svg>
<svg x="694.3" y="292.0" width="62.2" height="15" overflow="hidden"><g transform="translate(-694.3,-292.0)">
<text x="749.19" y="304.6" fill="#222" text-anchor="start" style='font-family:"Liberation Sans", sans-serif;font-size:11.2px;font-weight:400;' textLength="5.91" lengthAdjust="spacingAndGlyphs" stroke="#222" stroke-width="0.25">1</text>
</g></svg>
<svg x="886.3" y="292.0" width="62.09999999999998" height="15" overflow="hidden"><g transform="translate(-886.3,-292.0)">
<text x="887.80" y="304.6" fill="#222" text-anchor="start" style='font-family:"Liberation Sans", sans-serif;font-size:11.2px;font-weight:400;' textLength="5.91" lengthAdjust="spacingAndGlyphs" stroke="#222" stroke-width="0.25">0</text>
</g></svg>
<svg x="54.3" y="308.0" width="62.2" height="15" overflow="hidden"><g transform="translate(-54.3,-308.0)">
<text x="55.80" y="320.6" fill="#222" text-anchor="start" style='font-family:"Liberation Sans", sans-serif;font-size:11.2px;font-weight:400;' textLength="24.82" lengthAdjust="spacingAndGlyphs" stroke="#222" stroke-width="0.25">A013</text>
</g></svg>
<svg x="118.3" y="308.0" width="62.2" height="15" overflow="hidden"><g transform="translate(-118.3,-308.0)">
<text x="119.80" y="320.6" fill="#222" text-anchor="start" style='font-family:"Liberation Sans", sans-serif;font-size:11.2px;font-weight:400;' textLength="104.56" lengthAdjust="spacingAndGlyphs" stroke="#222" stroke-width="0.25">Leckortung (Personal)</text>
</g></svg>
<svg x="182.3" y="308.0" width="62.2" height="15" overflow="hidden"><g transform="translate(-182.3,-308.0)">
<text x="183.80" y="320.6" fill="#222" text-anchor="start" style='font-family:"Liberation Sans", sans-serif;font-size:11.2px;font-weight:400;' textLength="104.56" lengthAdjust="spacingAndGlyphs" stroke="#222" stroke-width="0.25">Leckortung (Personal)</text>
</g></svg>
<svg x="310.3" y="308.0" width="62.2" height="15" overflow="hidden"><g transform="translate(-310.3,-308.0)">
<text x="359.28" y="320.6" fill="#222" text-anchor="start" style='font-family:"Liberation Sans", sans-serif;font-size:11.2px;font-weight:400;' textLength="11.82" lengthAdjust="spacingAndGlyphs" stroke="#222" stroke-width="0.25">65</text>
</g></svg>
<svg x="374.3" y="308.0" width="62.2" height="15" overflow="hidden"><g transform="translate(-374.3,-308.0)">
<text x="429.19" y="320.6" fill="#222" text-anchor="start" style='font-family:"Liberation Sans", sans-serif;font-size:11.2px;font-weight:400;' textLength="5.91" lengthAdjust="spacingAndGlyphs" stroke="#222" stroke-width="0.25">0</text>
</g></svg>
<svg x="438.3" y="308.0" width="62.2" height="15" overflow="hidden"><g transform="translate(-438.3,-308.0)">
<text x="493.19" y="320.6" fill="#222" text-anchor="start" style='font-family:"Liberation Sans", sans-serif;font-size:11.2px;font-weight:400;' textLength="5.91" lengthAdjust="spacingAndGlyphs" stroke="#222" stroke-width="0.25">0</text>
</g></svg>
<svg x="502.3" y="308.0" width="62.2" height="15" overflow="hidden"><g transform="translate(-502.3,-308.0)">
<text x="557.19" y="320.6" fill="#222" text-anchor="start" style='font-family:"Liberation Sans", sans-serif;font-size:11.2px;font-weight:400;' textLength="5.91" lengthAdjust="spacingAndGlyphs" stroke="#222" stroke-width="0.25">0</text>
</g></svg>
<svg x="566.3" y="308.0" width="62.2" height="15" overflow="hidden"><g transform="translate(-566.3,-308.0)">
<text x="567.80" y="320.6" fill="#222" text-anchor="start" style='font-family:"Liberation Sans", sans-serif;font-size:11.2px;font-weight:400;' textLength="52.59" lengthAdjust="spacingAndGlyphs" stroke="#222" stroke-width="0.25">Leckortung</text>
</g></svg>
<svg x="630.3" y="308.0" width="62.2" height="15" overflow="hidden"><g transform="translate(-630.3,-308.0)">
<text x="631.80" y="320.6" fill="#222" text-anchor="start" style='font-family:"Liberation Sans", sans-serif;font-size:11.2px;font-weight:400;' textLength="65.00" lengthAdjust="spacingAndGlyphs" stroke="#222" stroke-width="0.25">Stundensätze</text>
</g></svg>
<svg x="694.3" y="308.0" width="62.2" height="15" overflow="hidden"><g transform="translate(-694.3,-308.0)">
<text x="749.19" y="320.6" fill="#222" text-anchor="start" style='font-family:"Liberation Sans", sans-serif;font-size:11.2px;font-weight:400;' textLength="5.91" lengthAdjust="spacingAndGlyphs" stroke="#222" stroke-width="0.25">1</text>
</g></svg>
<svg x="886.3" y="308.0" width="62.09999999999998" height="15" overflow="hidden"><g transform="translate(-886.3,-308.0)">
<text x="887.80" y="320.6" fill="#222" text-anchor="start" style='font-family:"Liberation Sans", sans-serif;font-size:11.2px;font-weight:400;' textLength="5.91" lengthAdjust="spacingAndGlyphs" stroke="#222" stroke-width="0.25">0</text>
</g></svg>
<svg x="54.3" y="324.0" width="62.2" height="15" overflow="hidden"><g transform="translate(-54.3,-324.0)">
<text x="55.80" y="336.6" fill="#222" text-anchor="start" style='font-family:"Liberation Sans", sans-serif;font-size:11.2px;font-weight:400;' textLength="24.82" lengthAdjust="spacingAndGlyphs" stroke="#222" stroke-width="0.25">A014</text>
</g></svg>
<svg x="118.3" y="324.0" width="62.2" height="15" overflow="hidden"><g transform="translate(-118.3,-324.0)">
<text x="119.80" y="336.6" fill="#222" text-anchor="start" style='font-family:"Liberation Sans", sans-serif;font-size:11.2px;font-weight:400;' textLength="64.98" lengthAdjust="spacingAndGlyphs" stroke="#222" stroke-width="0.25">Malerarbeiten</text>
</g></svg>
<svg x="182.3" y="324.0" width="62.2" height="15" overflow="hidden"><g transform="translate(-182.3,-324.0)">
<text x="183.80" y="336.6" fill="#222" text-anchor="start" style='font-family:"Liberation Sans", sans-serif;font-size:11.2px;font-weight:400;' textLength="64.98" lengthAdjust="spacingAndGlyphs" stroke="#222" stroke-width="0.25">Malerarbeiten</text>
</g></svg>
<svg x="310.3" y="324.0" width="62.2" height="15" overflow="hidden"><g transform="translate(-310.3,-324.0)">
<text x="359.28" y="336.6" fill="#222" text-anchor="start" style='font-family:"Liberation Sans", sans-serif;font-size:11.2px;font-weight:400;' textLength="11.82" lengthAdjust="spacingAndGlyphs" stroke="#222" stroke-width="0.25">38</text>
</g></svg>
<svg x="374.3" y="324.0" width="62.2" height="15" overflow="hidden"><g transform="translate(-374.3,-324.0)">
<text x="429.19" y="336.6" fill="#222" text-anchor="start" style='font-family:"Liberation Sans", sans-serif;font-size:11.2px;font-weight:400;' textLength="5.91" lengthAdjust="spacingAndGlyphs" stroke="#222" stroke-width="0.25">0</text>
</g></svg>
<svg x="438.3" y="324.0" width="62.2" height="15" overflow="hidden"><g transform="translate(-438.3,-324.0)">
<text x="493.19" y="336.6" fill="#222" text-anchor="start" style='font-family:"Liberation Sans", sans-serif;font-size:11.2px;font-weight:400;' textLength="5.91" lengthAdjust="spacingAndGlyphs" stroke="#222" stroke-width="0.25">0</text>
</g></svg>
<svg x="502.3" y="324.0" width="62.2" height="15" overflow="hidden"><g transform="translate(-502.3,-324.0)">
<text x="557.19" y="336.6" fill="#222" text-anchor="start" style='font-family:"Liberation Sans", sans-serif;font-size:11.2px;font-weight:400;' textLength="5.91" lengthAdjust="spacingAndGlyphs" stroke="#222" stroke-width="0.25">0</text>
</g></svg>
<svg x="566.3" y="324.0" width="62.2" height="15" overflow="hidden"><g transform="translate(-566.3,-324.0)">
<text x="567.80" y="336.6" fill="#222" text-anchor="start" style='font-family:"Liberation Sans", sans-serif;font-size:11.2px;font-weight:400;' textLength="48.45" lengthAdjust="spacingAndGlyphs" stroke="#222" stroke-width="0.25">Sanierung</text>
</g></svg>
<svg x="630.3" y="324.0" width="62.2" height="15" overflow="hidden"><g transform="translate(-630.3,-324.0)">
<text x="631.80" y="336.6" fill="#222" text-anchor="start" style='font-family:"Liberation Sans", sans-serif;font-size:11.2px;font-weight:400;' textLength="64.98" lengthAdjust="spacingAndGlyphs" stroke="#222" stroke-width="0.25">Malerarbeiten</text>
</g></svg>
<svg x="694.3" y="324.0" width="62.2" height="15" overflow="hidden"><g transform="translate(-694.3,-324.0)">
<text x="749.19" y="336.6" fill="#222" text-anchor="start" style='font-family:"Liberation Sans", sans-serif;font-size:11.2px;font-weight:400;' textLength="5.91" lengthAdjust="spacingAndGlyphs" stroke="#222" stroke-width="0.25">1</text>
</g></svg>
<svg x="886.3" y="324.0" width="62.09999999999998" height="15" overflow="hidden"><g transform="translate(-886.3,-324.0)">
<text x="887.80" y="336.6" fill="#222" text-anchor="start" style='font-family:"Liberation Sans", sans-serif;font-size:11.2px;font-weight:400;' textLength="5.91" lengthAdjust="spacingAndGlyphs" stroke="#222" stroke-width="0.25">0</text>
</g></svg>
<svg x="54.3" y="340.0" width="62.2" height="15" overflow="hidden"><g transform="translate(-54.3,-340.0)">
<text x="55.80" y="352.6" fill="#222" text-anchor="start" style='font-family:"Liberation Sans", sans-serif;font-size:11.2px;font-weight:400;' textLength="24.82" lengthAdjust="spacingAndGlyphs" stroke="#222" stroke-width="0.25">A017</text>
</g></svg>
<svg x="118.3" y="340.0" width="62.2" height="15" overflow="hidden"><g transform="translate(-118.3,-340.0)">
<text x="119.80" y="352.6" fill="#222" text-anchor="start" style='font-family:"Liberation Sans", sans-serif;font-size:11.2px;font-weight:400;' textLength="108.10" lengthAdjust="spacingAndGlyphs" stroke="#222" stroke-width="0.25">Zuschlag für (Arbeiten)</text>
</g></svg>
<svg x="182.3" y="340.0" width="62.2" height="15" overflow="hidden"><g transform="translate(-182.3,-340.0)">
<text x="183.80" y="352.6" fill="#222" text-anchor="start" style='font-family:"Liberation Sans", sans-serif;font-size:11.2px;font-weight:400;' textLength="88.62" lengthAdjust="spacingAndGlyphs" stroke="#222" stroke-width="0.25">Aufwandszuschlag</text>
</g></svg>
<svg x="374.3" y="340.0" width="62.2" height="15" overflow="hidden"><g transform="translate(-374.3,-340.0)">
<text x="429.19" y="352.6" fill="#222" text-anchor="start" style='font-family:"Liberation Sans", sans-serif;font-size:11.2px;font-weight:400;' textLength="5.91" lengthAdjust="spacingAndGlyphs" stroke="#222" stroke-width="0.25">0</text>
</g></svg>
<svg x="438.3" y="340.0" width="62.2" height="15" overflow="hidden"><g transform="translate(-438.3,-340.0)">
<text x="493.19" y="352.6" fill="#222" text-anchor="start" style='font-family:"Liberation Sans", sans-serif;font-size:11.2px;font-weight:400;' textLength="5.91" lengthAdjust="spacingAndGlyphs" stroke="#222" stroke-width="0.25">0</text>
</g></svg>
<svg x="502.3" y="340.0" width="62.2" height="15" overflow="hidden"><g transform="translate(-502.3,-340.0)">
<text x="557.19" y="352.6" fill="#222" text-anchor="start" style='font-family:"Liberation Sans", sans-serif;font-size:11.2px;font-weight:400;' textLength="5.91" lengthAdjust="spacingAndGlyphs" stroke="#222" stroke-width="0.25">0</text>
</g></svg>
<svg x="566.3" y="340.0" width="62.2" height="15" overflow="hidden"><g transform="translate(-566.3,-340.0)">
<text x="567.80" y="352.6" fill="#222" text-anchor="start" style='font-family:"Liberation Sans", sans-serif;font-size:11.2px;font-weight:400;' textLength="52.59" lengthAdjust="spacingAndGlyphs" stroke="#222" stroke-width="0.25">Leckortung</text>
</g></svg>
<svg x="630.3" y="340.0" width="62.2" height="15" overflow="hidden"><g transform="translate(-630.3,-340.0)">
<text x="631.80" y="352.6" fill="#222" text-anchor="start" style='font-family:"Liberation Sans", sans-serif;font-size:11.2px;font-weight:400;' textLength="65.00" lengthAdjust="spacingAndGlyphs" stroke="#222" stroke-width="0.25">Stundensätze</text>
</g></svg>
<svg x="694.3" y="340.0" width="62.2" height="15" overflow="hidden"><g transform="translate(-694.3,-340.0)">
<text x="749.19" y="352.6" fill="#222" text-anchor="start" style='font-family:"Liberation Sans", sans-serif;font-size:11.2px;font-weight:400;' textLength="5.91" lengthAdjust="spacingAndGlyphs" stroke="#222" stroke-width="0.25">1</text>
</g></svg>
<svg x="886.3" y="340.0" width="62.09999999999998" height="15" overflow="hidden"><g transform="translate(-886.3,-340.0)">
<text x="887.80" y="352.6" fill="#222" text-anchor="start" style='font-family:"Liberation Sans", sans-serif;font-size:11.2px;font-weight:400;' textLength="5.91" lengthAdjust="spacingAndGlyphs" stroke="#222" stroke-width="0.25">0</text>
</g></svg>
<svg x="54.3" y="356.0" width="62.2" height="15" overflow="hidden"><g transform="translate(-54.3,-356.0)">
<text x="55.80" y="368.6" fill="#222" text-anchor="start" style='font-family:"Liberation Sans", sans-serif;font-size:11.2px;font-weight:400;' textLength="24.03" lengthAdjust="spacingAndGlyphs" stroke="#222" stroke-width="0.25">A011</text>
</g></svg>
<svg x="118.3" y="356.0" width="62.2" height="15" overflow="hidden"><g transform="translate(-118.3,-356.0)">
<text x="119.80" y="368.6" fill="#222" text-anchor="start" style='font-family:"Liberation Sans", sans-serif;font-size:11.2px;font-weight:400;' textLength="90.41" lengthAdjust="spacingAndGlyphs" stroke="#222" stroke-width="0.25">Sanierung Planung</text>
</g></svg>
<svg x="182.3" y="356.0" width="62.2" height="15" overflow="hidden"><g transform="translate(-182.3,-356.0)">
<text x="183.80" y="368.6" fill="#222" text-anchor="start" style='font-family:"Liberation Sans", sans-serif;font-size:11.2px;font-weight:400;' textLength="90.41" lengthAdjust="spacingAndGlyphs" stroke="#222" stroke-width="0.25">Sanierung Planung</text>
</g></svg>
<svg x="310.3" y="356.0" width="62.2" height="15" overflow="hidden"><g transform="translate(-310.3,-356.0)">
<text x="353.37" y="368.6" fill="#222" text-anchor="start" style='font-family:"Liberation Sans", sans-serif;font-size:11.2px;font-weight:400;' textLength="17.73" lengthAdjust="spacingAndGlyphs" stroke="#222" stroke-width="0.25">120</text>
</g></svg>
<svg x="374.3" y="356.0" width="62.2" height="15" overflow="hidden"><g transform="translate(-374.3,-356.0)">
<text x="429.19" y="368.6" fill="#222" text-anchor="start" style='font-family:"Liberation Sans", sans-serif;font-size:11.2px;font-weight:400;' textLength="5.91" lengthAdjust="spacingAndGlyphs" stroke="#222" stroke-width="0.25">0</text>
</g></svg>
<svg x="438.3" y="356.0" width="62.2" height="15" overflow="hidden"><g transform="translate(-438.3,-356.0)">
<text x="493.19" y="368.6" fill="#222" text-anchor="start" style='font-family:"Liberation Sans", sans-serif;font-size:11.2px;font-weight:400;' textLength="5.91" lengthAdjust="spacingAndGlyphs" stroke="#222" stroke-width="0.25">0</text>
</g></svg>
<svg x="502.3" y="356.0" width="62.2" height="15" overflow="hidden"><g transform="translate(-502.3,-356.0)">
<text x="557.19" y="368.6" fill="#222" text-anchor="start" style='font-family:"Liberation Sans", sans-serif;font-size:11.2px;font-weight:400;' textLength="5.91" lengthAdjust="spacingAndGlyphs" stroke="#222" stroke-width="0.25">0</text>
</g></svg>
<svg x="566.3" y="356.0" width="62.2" height="15" overflow="hidden"><g transform="translate(-566.3,-356.0)">
<text x="567.80" y="368.6" fill="#222" text-anchor="start" style='font-family:"Liberation Sans", sans-serif;font-size:11.2px;font-weight:400;' textLength="48.45" lengthAdjust="spacingAndGlyphs" stroke="#222" stroke-width="0.25">Sanierung</text>
</g></svg>
<svg x="630.3" y="356.0" width="62.2" height="15" overflow="hidden"><g transform="translate(-630.3,-356.0)">
<text x="631.80" y="368.6" fill="#222" text-anchor="start" style='font-family:"Liberation Sans", sans-serif;font-size:11.2px;font-weight:400;' textLength="39.00" lengthAdjust="spacingAndGlyphs" stroke="#222" stroke-width="0.25">Planung</text>
</g></svg>
<svg x="694.3" y="356.0" width="62.2" height="15" overflow="hidden"><g transform="translate(-694.3,-356.0)">
<text x="749.19" y="368.6" fill="#222" text-anchor="start" style='font-family:"Liberation Sans", sans-serif;font-size:11.2px;font-weight:400;' textLength="5.91" lengthAdjust="spacingAndGlyphs" stroke="#222" stroke-width="0.25">1</text>
</g></svg>
<svg x="886.3" y="356.0" width="62.09999999999998" height="15" overflow="hidden"><g transform="translate(-886.3,-356.0)">
<text x="887.80" y="368.6" fill="#222" text-anchor="start" style='font-family:"Liberation Sans", sans-serif;font-size:11.2px;font-weight:400;' textLength="5.91" lengthAdjust="spacingAndGlyphs" stroke="#222" stroke-width="0.25">0</text>
</g></svg>
<svg x="54.3" y="372.0" width="62.2" height="15" overflow="hidden"><g transform="translate(-54.3,-372.0)">
<text x="55.80" y="384.6" fill="#222" text-anchor="start" style='font-family:"Liberation Sans", sans-serif;font-size:11.2px;font-weight:400;' textLength="24.82" lengthAdjust="spacingAndGlyphs" stroke="#222" stroke-width="0.25">A012</text>
</g></svg>
<svg x="118.3" y="372.0" width="62.2" height="15" overflow="hidden"><g transform="translate(-118.3,-372.0)">
<text x="119.80" y="384.6" fill="#222" text-anchor="start" style='font-family:"Liberation Sans", sans-serif;font-size:11.2px;font-weight:400;' textLength="64.98" lengthAdjust="spacingAndGlyphs" stroke="#222" stroke-width="0.25">Malerarbeiten</text>
</g></svg>
<svg x="182.3" y="372.0" width="62.2" height="15" overflow="hidden"><g transform="translate(-182.3,-372.0)">
<text x="183.80" y="384.6" fill="#222" text-anchor="start" style='font-family:"Liberation Sans", sans-serif;font-size:11.2px;font-weight:400;' textLength="64.98" lengthAdjust="spacingAndGlyphs" stroke="#222" stroke-width="0.25">Malerarbeiten</text>
</g></svg>
<svg x="310.3" y="372.0" width="62.2" height="15" overflow="hidden"><g transform="translate(-310.3,-372.0)">
<text x="359.28" y="384.6" fill="#222" text-anchor="start" style='font-family:"Liberation Sans", sans-serif;font-size:11.2px;font-weight:400;' textLength="11.82" lengthAdjust="spacingAndGlyphs" stroke="#222" stroke-width="0.25">42</text>
</g></svg>
<svg x="374.3" y="372.0" width="62.2" height="15" overflow="hidden"><g transform="translate(-374.3,-372.0)">
<text x="429.19" y="384.6" fill="#222" text-anchor="start" style='font-family:"Liberation Sans", sans-serif;font-size:11.2px;font-weight:400;' textLength="5.91" lengthAdjust="spacingAndGlyphs" stroke="#222" stroke-width="0.25">0</text>
</g></svg>
<svg x="438.3" y="372.0" width="62.2" height="15" overflow="hidden"><g transform="translate(-438.3,-372.0)">
<text x="493.19" y="384.6" fill="#222" text-anchor="start" style='font-family:"Liberation Sans", sans-serif;font-size:11.2px;font-weight:400;' textLength="5.91" lengthAdjust="spacingAndGlyphs" stroke="#222" stroke-width="0.25">0</text>
</g></svg>
<svg x="502.3" y="372.0" width="62.2" height="15" overflow="hidden"><g transform="translate(-502.3,-372.0)">
<text x="557.19" y="384.6" fill="#222" text-anchor="start" style='font-family:"Liberation Sans", sans-serif;font-size:11.2px;font-weight:400;' textLength="5.91" lengthAdjust="spacingAndGlyphs" stroke="#222" stroke-width="0.25">0</text>
</g></svg>
<svg x="566.3" y="372.0" width="62.2" height="15" overflow="hidden"><g transform="translate(-566.3,-372.0)">
<text x="567.80" y="384.6" fill="#222" text-anchor="start" style='font-family:"Liberation Sans", sans-serif;font-size:11.2px;font-weight:400;' textLength="29.53" lengthAdjust="spacingAndGlyphs" stroke="#222" stroke-width="0.25">GAEB</text>
</g></svg>
<svg x="630.3" y="372.0" width="62.2" height="15" overflow="hidden"><g transform="translate(-630.3,-372.0)">
<text x="631.80" y="384.6" fill="#222" text-anchor="start" style='font-family:"Liberation Sans", sans-serif;font-size:11.2px;font-weight:400;' textLength="3.54" lengthAdjust="spacingAndGlyphs" stroke="#222" stroke-width="0.25">-</text>
</g></svg>
<svg x="694.3" y="372.0" width="62.2" height="15" overflow="hidden"><g transform="translate(-694.3,-372.0)">
<text x="749.19" y="384.6" fill="#222" text-anchor="start" style='font-family:"Liberation Sans", sans-serif;font-size:11.2px;font-weight:400;' textLength="5.91" lengthAdjust="spacingAndGlyphs" stroke="#222" stroke-width="0.25">1</text>
</g></svg>
<svg x="886.3" y="372.0" width="62.09999999999998" height="15" overflow="hidden"><g transform="translate(-886.3,-372.0)">
<text x="887.80" y="384.6" fill="#222" text-anchor="start" style='font-family:"Liberation Sans", sans-serif;font-size:11.2px;font-weight:400;' textLength="5.91" lengthAdjust="spacingAndGlyphs" stroke="#222" stroke-width="0.25">0</text>
</g></svg>
<svg x="246.3" y="228.0" width="62.2" height="15" overflow="hidden"><g transform="translate(-246.3,-228.0)">
<text x="247.80" y="240.6" fill="#222" text-anchor="start" style='font-family:"Liberation Sans", sans-serif;font-size:11.2px;font-weight:400;' textLength="22.45" lengthAdjust="spacingAndGlyphs" stroke="#222" stroke-width="0.25">psch</text>
</g></svg>
<svg x="246.3" y="340.0" width="62.2" height="15" overflow="hidden"><g transform="translate(-246.3,-340.0)">
<text x="247.80" y="352.6" fill="#222" text-anchor="start" style='font-family:"Liberation Sans", sans-serif;font-size:11.2px;font-weight:400;' textLength="5.91" lengthAdjust="spacingAndGlyphs" stroke="#222" stroke-width="0.25">1</text>
</g></svg>
<path d="M886.3 227.9 h5.2 L886.3 233.1 Z" fill="#0b6e2e" stroke="none" stroke-width="1" />
<path d="M886.3 243.9 h5.2 L886.3 249.1 Z" fill="#0b6e2e" stroke="none" stroke-width="1" />
<path d="M886.3 259.9 h5.2 L886.3 265.09999999999997 Z" fill="#0b6e2e" stroke="none" stroke-width="1" />
<path d="M886.3 275.9 h5.2 L886.3 281.09999999999997 Z" fill="#0b6e2e" stroke="none" stroke-width="1" />
<path d="M886.3 291.9 h5.2 L886.3 297.09999999999997 Z" fill="#0b6e2e" stroke="none" stroke-width="1" />
<path d="M886.3 307.9 h5.2 L886.3 313.09999999999997 Z" fill="#0b6e2e" stroke="none" stroke-width="1" />
<path d="M886.3 323.9 h5.2 L886.3 329.09999999999997 Z" fill="#0b6e2e" stroke="none" stroke-width="1" />
<path d="M886.3 339.9 h5.2 L886.3 345.09999999999997 Z" fill="#0b6e2e" stroke="none" stroke-width="1" />
<path d="M886.3 355.9 h5.2 L886.3 361.09999999999997 Z" fill="#0b6e2e" stroke="none" stroke-width="1" />
<path d="M886.3 371.9 h5.2 L886.3 377.09999999999997 Z" fill="#0b6e2e" stroke="none" stroke-width="1" />
<path d="M246.3 339.9 h5.2 L246.3 345.09999999999997 Z" fill="#0b6e2e" stroke="none" stroke-width="1" />
<rect x="103.5" y="213.3" width="12.8" height="13.3" fill="#f1f1f1" stroke="#dcdcdc" stroke-width="0.8"/>
<path d="M107.7 219.2 h4.6 l-2.3 2.5 z" fill="#666" stroke="none" stroke-width="1" />
<rect x="167.5" y="213.3" width="12.8" height="13.3" fill="#f1f1f1" stroke="#dcdcdc" stroke-width="0.8"/>
<path d="M171.7 219.2 h4.6 l-2.3 2.5 z" fill="#666" stroke="none" stroke-width="1" />
<rect x="231.5" y="213.3" width="12.8" height="13.3" fill="#f1f1f1" stroke="#dcdcdc" stroke-width="0.8"/>
<path d="M235.7 219.2 h4.6 l-2.3 2.5 z" fill="#666" stroke="none" stroke-width="1" />
<rect x="295.5" y="213.3" width="12.8" height="13.3" fill="#f1f1f1" stroke="#dcdcdc" stroke-width="0.8"/>
<path d="M299.7 219.2 h4.6 l-2.3 2.5 z" fill="#666" stroke="none" stroke-width="1" />
<rect x="359.5" y="213.3" width="12.8" height="13.3" fill="#f1f1f1" stroke="#dcdcdc" stroke-width="0.8"/>
<path d="M363.7 219.2 h4.6 l-2.3 2.5 z" fill="#666" stroke="none" stroke-width="1" />
<rect x="423.5" y="213.3" width="12.8" height="13.3" fill="#f1f1f1" stroke="#dcdcdc" stroke-width="0.8"/>
<path d="M427.7 219.2 h4.6 l-2.3 2.5 z" fill="#666" stroke="none" stroke-width="1" />
<rect x="487.5" y="213.3" width="12.8" height="13.3" fill="#f1f1f1" stroke="#dcdcdc" stroke-width="0.8"/>
<path d="M491.7 219.2 h4.6 l-2.3 2.5 z" fill="#666" stroke="none" stroke-width="1" />
<rect x="551.5" y="213.3" width="12.8" height="13.3" fill="#f1f1f1" stroke="#dcdcdc" stroke-width="0.8"/>
<path d="M555.7 219.2 h4.6 l-2.3 2.5 z" fill="#666" stroke="none" stroke-width="1" />
<rect x="615.5" y="213.3" width="12.8" height="13.3" fill="#f1f1f1" stroke="#dcdcdc" stroke-width="0.8"/>
<path d="M619.7 219.2 h4.6 l-2.3 2.5 z" fill="#666" stroke="none" stroke-width="1" />
<rect x="679.5" y="213.3" width="12.8" height="13.3" fill="#f1f1f1" stroke="#dcdcdc" stroke-width="0.8"/>
<path d="M683.7 219.2 h4.6 l-2.3 2.5 z" fill="#666" stroke="none" stroke-width="1" />
<rect x="743.5" y="213.3" width="12.8" height="13.3" fill="#f1f1f1" stroke="#dcdcdc" stroke-width="0.8"/>
<path d="M747.7 219.2 h4.6 l-2.3 2.5 z" fill="#666" stroke="none" stroke-width="1" />
<rect x="807.5" y="213.3" width="12.8" height="13.3" fill="#f1f1f1" stroke="#dcdcdc" stroke-width="0.8"/>
<path d="M811.7 219.2 h4.6 l-2.3 2.5 z" fill="#666" stroke="none" stroke-width="1" />
<rect x="871.5" y="213.3" width="12.8" height="13.3" fill="#f1f1f1" stroke="#dcdcdc" stroke-width="0.8"/>
<path d="M875.7 219.2 h4.6 l-2.3 2.5 z" fill="#666" stroke="none" stroke-width="1" />
<rect x="935.4" y="213.3" width="12.8" height="13.3" fill="#f1f1f1" stroke="#dcdcdc" stroke-width="0.8"/>
<path d="M939.6 219.2 h4.6 l-2.3 2.5 z" fill="#666" stroke="none" stroke-width="1" />
<rect x="1294.5" y="196.5" width="16.5" height="452" fill="#e6e6e6" />
<rect x="1296.5" y="198.2" width="12" height="11.5" fill="#ffffff" stroke="#d8d8d8" stroke-width="0.8"/>
<path d="M1299.6 205.8 h5.8 l-2.9 -3.2 z" fill="#606060" stroke="none" stroke-width="1" />
<rect x="1296.8" y="210.3" width="11.6" height="408.2" fill="#ffffff" stroke="#bdbdbd" stroke-width="0.9"/>
<rect x="1296.5" y="618.8" width="12" height="17" fill="#dadada" />
<rect x="1296.5" y="636" width="12" height="11.5" fill="#ffffff" stroke="#d8d8d8" stroke-width="0.8"/>
<path d="M1299.6 640 h5.8 l-2.9 3.2 z" fill="#606060" stroke="none" stroke-width="1" />
<rect x="31" y="648" width="1280" height="19.3" fill="#e6e6e6" />
<rect x="31" y="648" width="1280" height="1" fill="#c4c4c4" />
<path d="M53 654.5 l-2.5 3 l2.5 3" fill="none" stroke="#b4b4b4" stroke-width="1.1" />
<path d="M69.5 654.5 l2.5 3 l-2.5 3" fill="none" stroke="#b4b4b4" stroke-width="1.1" />
<rect x="99.5" y="648" width="41.3" height="17" fill="#ffffff" />
<rect x="99.5" y="648" width="0.8" height="17" fill="#d0d0d0" />
<rect x="140" y="648" width="0.8" height="17" fill="#d0d0d0" />
<rect x="99.5" y="663.6" width="41.3" height="1.8" fill="#217346" />
<text x="108.30" y="659.4" fill="#217346" text-anchor="start" style='font-family:"Liberation Sans", sans-serif;font-size:11px;font-weight:700;' textLength="24.70" lengthAdjust="spacingAndGlyphs" >Data</text>
<circle cx="169.4" cy="657.6" r="6.4" fill="none" stroke="#6a6a6a" stroke-width="0.9"/>
<path d="M165.6 657.6 h7.6 M169.4 653.8 v7.6" fill="none" stroke="#555" stroke-width="1.2" />
<rect x="797.3" y="653.2" width="1.6" height="1.6" fill="#8a8a8a" />
<rect x="797.3" y="656.8000000000001" width="1.6" height="1.6" fill="#8a8a8a" />
<rect x="797.3" y="660.4000000000001" width="1.6" height="1.6" fill="#8a8a8a" />
<rect x="810" y="652" width="11" height="11.7" fill="#ffffff" stroke="#d8d8d8" stroke-width="0.8"/>
<path d="M817.8 654.8 v5.8 l-3.2 -2.9 z" fill="#606060" stroke="none" stroke-width="1" />
<rect x="821.5" y="652" width="431.5" height="11.7" fill="#ffffff" stroke="#bdbdbd" stroke-width="0.9"/>
<rect x="1253" y="652" width="28.5" height="11.7" fill="#dadada" />
<rect x="1281.7" y="652" width="11.6" height="11.7" fill="#ffffff" stroke="#d8d8d8" stroke-width="0.8"/>
<path d="M1286.3 654.8 v5.8 l3.2 -2.9 z" fill="#606060" stroke="none" stroke-width="1" />
<rect x="31" y="667.2" width="1280" height="18.8" fill="#f3f3f3" />
<rect x="31" y="667" width="1280" height="1" fill="#d2d2d2" />
<text x="35.90" y="680.2" fill="#444" text-anchor="start" style='font-family:"Liberation Sans", sans-serif;font-size:10.3px;font-weight:400;' textLength="21.60" lengthAdjust="spacingAndGlyphs" >Bereit</text>
<text x="855.00" y="680.2" fill="#444" text-anchor="start" style='font-family:"Liberation Sans", sans-serif;font-size:10.3px;font-weight:400;' textLength="68.50" lengthAdjust="spacingAndGlyphs" >Mittelwert: 16,209</text>
<text x="958.00" y="680.2" fill="#444" text-anchor="start" style='font-family:"Liberation Sans", sans-serif;font-size:10.3px;font-weight:400;' textLength="43.50" lengthAdjust="spacingAndGlyphs" >Anzahl: 140</text>
<text x="1012.00" y="680.2" fill="#444" text-anchor="start" style='font-family:"Liberation Sans", sans-serif;font-size:10.3px;font-weight:400;' textLength="58.50" lengthAdjust="spacingAndGlyphs" >Summe: 810,45</text>
<rect x="1084.8" y="667.8" width="26.9" height="18.2" fill="#c8c8c8" />
<rect x="1093" y="671.5" width="10.5" height="10.5" fill="none" stroke="#555" stroke-width="0.9"/>
<path d="M1096.5 671.5 v10.5 M1100 671.5 v10.5 M1093 675 h10.5 M1093 678.5 h10.5" fill="none" stroke="#555" stroke-width="0.8" />
<rect x="1120.3" y="671.5" width="10.5" height="10.5" fill="none" stroke="#666" stroke-width="0.9"/>
<rect x="1123" y="673.5" width="5" height="6.5" fill="none" stroke="#666" stroke-width="0.8"/>
<rect x="1148.3" y="671.5" width="10.5" height="10.5" fill="none" stroke="#666" stroke-width="0.9"/>
<path d="M1151.5 671.5 v4.5 h4 v-4.5" fill="none" stroke="#666" stroke-width="0.9" />
<line x1="1171.8" y1="677" x2="1177.6" y2="677" stroke="#555" stroke-width="1.3" />
<rect x="1181.4" y="676.5" width="82.6" height="1" fill="#c6c6c6" />
<rect x="1221.4" y="672.2" width="3" height="9.5" fill="#666" />
<path d="M1267.2 677 h6 M1270.2 674 v6" fill="none" stroke="#555" stroke-width="1.3" />
<text x="1282.00" y="680.8" fill="#444" text-anchor="start" style='font-family:"Liberation Sans", sans-serif;font-size:10.3px;font-weight:400;' textLength="22.80" lengthAdjust="spacingAndGlyphs" >100 %</text>
<rect x="31" y="686" width="1280" height="6" fill="#2e2e28" />
<rect x="31" y="686" width="40" height="6" fill="#2d2924" />
<rect x="814" y="686" width="40" height="6" fill="#4a4a48" />
<text x="1227.00" y="697.8" fill="#ffffff" text-anchor="start" style='font-family:"Liberation Sans", sans-serif;font-size:11px;font-weight:400;' textLength="22.00" lengthAdjust="spacingAndGlyphs" >12:55</text>
<rect x="31.5" y="228.6" width="1262.8" height="160" rx="1" fill="none" stroke="#ff0000" stroke-width="3"/>
<text x="10.10" y="239.9" fill="#ff0000" text-anchor="start" style='font-family:"Liberation Sans", sans-serif;font-size:13.5px;font-weight:700;' textLength="15.10" lengthAdjust="spacingAndGlyphs" >3a</text>
<rect x="329.5" y="242.6" width="205.5" height="44.3" fill="#d9d9d9"/>
<rect x="330.2" y="243.4" width="204.2" height="43" fill="#ffffff"/>
<rect x="332.3" y="245.8" width="86.8" height="19.5" fill="#ffffff" stroke="#d6d6d6" stroke-width="0.9"/>
<line x1="383" y1="246" x2="383" y2="265" stroke="#d6d6d6" stroke-width="0.9" />
<text x="334.40" y="258.5" fill="#555" text-anchor="start" style='font-family:"Liberation Sans", sans-serif;font-size:10px;font-weight:400;' textLength="28.30" lengthAdjust="spacingAndGlyphs" >Calibri</text>
<path d="M374.5 255.0 h4 l-2 2 z" fill="#666" stroke="none" stroke-width="1" />
<text x="386.00" y="258.5" fill="#555" text-anchor="start" style='font-family:"Liberation Sans", sans-serif;font-size:10px;font-weight:400;' textLength="8.50" lengthAdjust="spacingAndGlyphs" >11</text>
<path d="M411 255.0 h4 l-2 2 z" fill="#666" stroke="none" stroke-width="1" />
<text x="424.30" y="261" fill="#555" text-anchor="start" style='font-family:"Liberation Sans", sans-serif;font-size:11px;font-weight:400;' textLength="8.50" lengthAdjust="spacingAndGlyphs" >A</text>
<path d="M430.6 251.5 l1.8 -1.8 l1.8 1.8 z" fill="#3f7fc5" stroke="none" stroke-width="1" />
<text x="441.20" y="261" fill="#555" text-anchor="start" style='font-family:"Liberation Sans", sans-serif;font-size:11px;font-weight:400;' textLength="8.50" lengthAdjust="spacingAndGlyphs" >A</text>
<path d="M447.3 249.7 l1.8 1.8 l1.8 -1.8 z" fill="#3f7fc5" stroke="none" stroke-width="1" />
<rect x="456.6" y="249.6" width="12.4" height="6.8" fill="#3f7fc5" />
<rect x="458.1" y="251.1" width="9.4" height="3.8" fill="#fff" />
<ellipse cx="462.5" cy="253" rx="2" ry="1.4" fill="#3f7fc5"/>
<rect x="464" y="255.2" width="5" height="5.8" rx="1.6" fill="#eec58a" stroke="#fff" stroke-width="0.6"/>
<line x1="464.2" y1="257.6" x2="468.8" y2="257.6" stroke="#d9a860" stroke-width="0.6" />
<rect x="459.8" y="258" width="5" height="5" rx="1.6" fill="#eec58a" stroke="#fff" stroke-width="0.6"/>
<line x1="460" y1="260.4" x2="464.6" y2="260.4" stroke="#d9a860" stroke-width="0.6" />
<path d="M473.7 255.0 h4 l-2 2 z" fill="#666" stroke="none" stroke-width="1" />
<text x="483.50" y="261.3" fill="#555" text-anchor="start" style='font-family:"Liberation Sans", sans-serif;font-size:13px;font-weight:400;' textLength="10.40" lengthAdjust="spacingAndGlyphs" >%</text>
<text x="499.30" y="259.7" fill="#555" text-anchor="start" style='font-family:"Liberation Sans", sans-serif;font-size:8px;font-weight:400;' textLength="12.00" lengthAdjust="spacingAndGlyphs" >000</text>
<rect x="517.3" y="249.3" width="12.4" height="12.2" fill="#fff" stroke="#777" stroke-width="0.9"/>
<line x1="517.3" y1="252.5" x2="529.7" y2="252.5" stroke="#999" stroke-width="0.8" />
<line x1="517.3" y1="258.3" x2="529.7" y2="258.3" stroke="#999" stroke-width="0.8" />
<path d="M519 255.4 h9 M520.5 254.1 l-1.5 1.3 l1.5 1.3 M526.5 254.1 l1.5 1.3 l-1.5 1.3" fill="none" stroke="#3f7fc5" stroke-width="0.9" />
<text x="336.80" y="279.3" fill="#444" text-anchor="start" style='font-family:"Liberation Sans", sans-serif;font-size:11.5px;font-weight:700;' textLength="6.60" lengthAdjust="spacingAndGlyphs" >F</text>
<text x="353.30" y="279.3" fill="#444" text-anchor="start" style='font-family:"Liberation Sans", sans-serif;font-size:11.5px;font-weight:700;font-style:italic' textLength="8.60" lengthAdjust="spacingAndGlyphs" >K</text>
<line x1="369.5" y1="270.5" x2="380.5" y2="270.5" stroke="#999" stroke-width="0.9" />
<line x1="371.0" y1="273" x2="379.0" y2="273" stroke="#999" stroke-width="0.9" />
<line x1="369.5" y1="275.5" x2="380.5" y2="275.5" stroke="#999" stroke-width="0.9" />
<line x1="371.0" y1="278" x2="379.0" y2="278" stroke="#999" stroke-width="0.9" />
<path d="M388.5 273.5 L393 269 L398 274 L393.5 278.5 Z" fill="#fff" stroke="#555" stroke-width="0.9" />
<path d="M398 274 q2 2 1 4" fill="none" stroke="#3f7fc5" stroke-width="1.2" />
<rect x="386.6" y="279.3" width="13.7" height="3" fill="#ffff00" />
<path d="M403.6 274.5 h4 l-2 2 z" fill="#666" stroke="none" stroke-width="1" />
<text x="412.50" y="277.8" fill="#444" text-anchor="start" style='font-family:"Liberation Sans", sans-serif;font-size:11px;font-weight:400;' textLength="11.50" lengthAdjust="spacingAndGlyphs" >A</text>
<rect x="412" y="279.3" width="13.7" height="3" fill="#ff0000" />
<path d="M429.6 274.5 h4 l-2 2 z" fill="#666" stroke="none" stroke-width="1" />
<rect x="439" y="269.5" width="11" height="11" fill="#fff" stroke="#b5b5b5" stroke-width="0.9"/>
<line x1="444.5" y1="269.5" x2="444.5" y2="280.5" stroke="#c8c8c8" stroke-width="0.8" />
<line x1="439" y1="275" x2="450" y2="275" stroke="#c8c8c8" stroke-width="0.8" />
<path d="M455.5 274.5 h4 l-2 2 z" fill="#666" stroke="none" stroke-width="1" />
<text x="468.50" y="274.5" fill="#555" text-anchor="start" style='font-family:"Liberation Sans", sans-serif;font-size:7px;font-weight:400;' textLength="6.50" lengthAdjust="spacingAndGlyphs" >,0</text>
<text x="467.00" y="280.5" fill="#555" text-anchor="start" style='font-family:"Liberation Sans", sans-serif;font-size:7px;font-weight:400;' textLength="9.00" lengthAdjust="spacingAndGlyphs" >,00</text>
<path d="M466 272.5 h5 M468 270.5 l-2 2 l2 2" fill="none" stroke="#3f7fc5" stroke-width="1.2" />
<text x="484.50" y="274.5" fill="#555" text-anchor="start" style='font-family:"Liberation Sans", sans-serif;font-size:7px;font-weight:400;' textLength="9.00" lengthAdjust="spacingAndGlyphs" >,00</text>
<text x="486.50" y="280.5" fill="#555" text-anchor="start" style='font-family:"Liberation Sans", sans-serif;font-size:7px;font-weight:400;' textLength="6.50" lengthAdjust="spacingAndGlyphs" >,0</text>
<path d="M482.5 278 h5 M485.5 276 l2 2 l-2 2" fill="none" stroke="#3f7fc5" stroke-width="1.2" />
<path d="M500 278.5 L505 273.5 L508.5 277 L503.5 282 Z" fill="#e8b66f" stroke="none" stroke-width="1" />
<path d="M506 274 L509.5 270.5 L511 272 L507.5 275.5 Z" fill="#555" stroke="none" stroke-width="1" />
<rect x="329.6" y="299.6" width="134.8" height="250.3" fill="#d4d4d4"/>
<rect x="330.4" y="300.4" width="133.2" height="248.7" fill="#ffffff"/>
<path d="M335.5 305.5 L342.5 313.5 M343 305.5 L336 313.5" fill="none" stroke="#505050" stroke-width="1.1" />
<circle cx="336.2" cy="314.5" r="1.9" fill="none" stroke="#3f7fc5" stroke-width="1.1"/>
<circle cx="342.8" cy="314.5" r="1.9" fill="none" stroke="#3f7fc5" stroke-width="1.1"/>
<text x="355.90" y="314.9" fill="#5e5e5e" text-anchor="start" style='font-family:"Liberation Sans", sans-serif;font-size:10.6px;font-weight:400;' textLength="59.60" lengthAdjust="spacingAndGlyphs" >Ausschneiden</text>
<path d="M334.5 324.5 H339.5 L341 326 V332.5 H334.5 Z" fill="#fff" stroke="#6d6d6d" stroke-width="0.9" />
<path d="M338.7 327.5 H343.5 L345.5 329.5 V336 H338.7 Z" fill="#dce8f5" stroke="#6d6d6d" stroke-width="0.9" />
<path d="M335.8 327 h2.3 M335.8 328.7 h2.3 M335.8 330.4 h2.3" fill="none" stroke="#3f7fc5" stroke-width="0.7" />
<text x="355.90" y="334.7" fill="#5e5e5e" text-anchor="start" style='font-family:"Liberation Sans", sans-serif;font-size:10.6px;font-weight:400;' textLength="39.80" lengthAdjust="spacingAndGlyphs" >Kopieren</text>
<rect x="350.4" y="341.2" width="113.2" height="17.3" fill="#e8e8e8" />
<rect x="334.3" y="344.2" width="9.3" height="11.7" fill="#e8c17b" />
<rect x="336.5" y="343" width="5" height="2.4" fill="#6d6d6d" />
<path d="M340 348.5 H344.3 L346.8 351 V356 H340 Z" fill="#fff" stroke="#6d6d6d" stroke-width="0.8" />
<text x="355.90" y="353.3" fill="#4e4e4e" text-anchor="start" style='font-family:"Liberation Sans", sans-serif;font-size:10.6px;font-weight:700;' textLength="80.50" lengthAdjust="spacingAndGlyphs" >Einfügeoptionen:</text>
<rect x="357" y="365" width="9.8" height="13.5" fill="#e8c17b" />
<rect x="359.5" y="363.7" width="5" height="2.6" fill="#6d6d6d" />
<path d="M362.9 369.7 H367.5 L370.2 372.5 V378.8 H362.9 Z" fill="#fff" stroke="#6d6d6d" stroke-width="0.8" />
<text x="355.90" y="398.3" fill="#5e5e5e" text-anchor="start" style='font-family:"Liberation Sans", sans-serif;font-size:10.6px;font-weight:400;' textLength="77.30" lengthAdjust="spacingAndGlyphs" >Inhalte einfügen...</text>
<rect x="356.6" y="404" width="107" height="0.9" fill="#e1e1e1" />
<text x="355.90" y="420.7" fill="#5e5e5e" text-anchor="start" style='font-family:"Liberation Sans", sans-serif;font-size:10.6px;font-weight:400;' textLength="67.80" lengthAdjust="spacingAndGlyphs" >Zellen einfügen</text>
<rect x="329.2" y="426.3" width="135.6" height="19.2" fill="#c6c6c6" />
<rect x="329.2" y="426.3" width="135.6" height="19.2" fill="none" stroke="#ff0000" stroke-width="2.6"/>
<text x="355.90" y="440.1" fill="#333" text-anchor="start" style='font-family:"Liberation Sans", sans-serif;font-size:10.6px;font-weight:400;' textLength="63.30" lengthAdjust="spacingAndGlyphs" >Zellen löschen</text>
<text x="355.90" y="460.7" fill="#5e5e5e" text-anchor="start" style='font-family:"Liberation Sans", sans-serif;font-size:10.6px;font-weight:400;' textLength="65.60" lengthAdjust="spacingAndGlyphs" >Inhalte löschen</text>
<rect x="356.6" y="466.2" width="107" height="0.9" fill="#e1e1e1" />
<rect x="335.2" y="473.5" width="11" height="10.5" fill="#fff" stroke="#777" stroke-width="0.9"/>
<rect x="335.2" y="473.5" width="11" height="2" fill="#3f7fc5" />
<path d="M337 478 h1.5 M337 480.3 h1.5 M337 482.5 h1.5 M340 478 h4.5 M340 480.3 h4.5 M340 482.5 h4.5" fill="none" stroke="#777" stroke-width="0.8" />
<text x="355.90" y="482.9" fill="#5e5e5e" text-anchor="start" style='font-family:"Liberation Sans", sans-serif;font-size:10.6px;font-weight:400;' textLength="87.60" lengthAdjust="spacingAndGlyphs" >Zellen formatieren...</text>
<text x="355.90" y="503.0" fill="#5e5e5e" text-anchor="start" style='font-family:"Liberation Sans", sans-serif;font-size:10.6px;font-weight:400;' textLength="55.00" lengthAdjust="spacingAndGlyphs" >Zeilenhöhe...</text>
<text x="355.90" y="522.6" fill="#5e5e5e" text-anchor="start" style='font-family:"Liberation Sans", sans-serif;font-size:10.6px;font-weight:400;' textLength="51.70" lengthAdjust="spacingAndGlyphs" >Ausblenden</text>
<text x="355.90" y="542.7" fill="#5e5e5e" text-anchor="start" style='font-family:"Liberation Sans", sans-serif;font-size:10.6px;font-weight:400;' textLength="48.90" lengthAdjust="spacingAndGlyphs" >Einblenden</text>
<rect x="375.2" y="316.2" width="4.7" height="0.8" fill="#777" />
<rect x="362" y="335.9" width="5" height="0.8" fill="#777" />
<rect x="412" y="399.5" width="5" height="0.8" fill="#777" />
<rect x="383.5" y="421.5" width="5" height="0.8" fill="#777" />
<rect x="386.8" y="441" width="5" height="0.8" fill="#777" />
<rect x="382.3" y="461.5" width="3" height="0.8" fill="#777" />
<rect x="385.6" y="483.8" width="3" height="0.8" fill="#777" />
<rect x="356" y="503.8" width="5.5" height="0.8" fill="#777" />
<rect x="396.5" y="523.4" width="5.5" height="0.8" fill="#777" />
<rect x="363.3" y="543.5" width="2" height="0.8" fill="#777" />
<rect x="290" y="421" width="38" height="29" fill="#ffffff" />
<text x="304.20" y="440.8" fill="#ff0000" text-anchor="start" style='font-family:"Liberation Sans", sans-serif;font-size:13.5px;font-weight:700;' textLength="14.40" lengthAdjust="spacingAndGlyphs" >3c</text>
</svg></body></html>
